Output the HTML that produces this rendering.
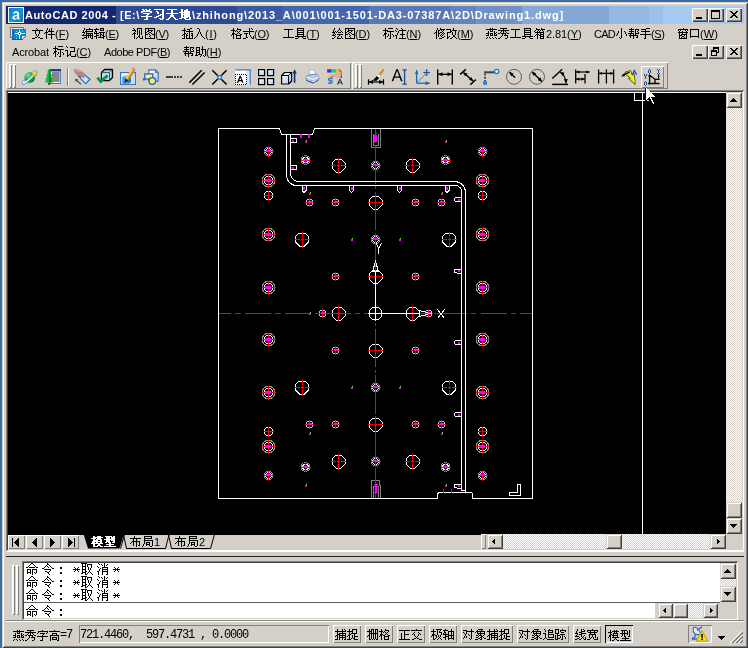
<!DOCTYPE html>
<html lang="zh"><head><meta charset="utf-8"><title>AutoCAD 2004</title>
<style>
html,body{margin:0;padding:0}
body{width:748px;height:648px;background:#3a6ea5;position:relative;overflow:hidden;font-family:"Liberation Sans",sans-serif;font-size:11px;color:#000}
div,span,svg.t,svg.i{position:absolute;box-sizing:border-box}
svg.t{fill:currentColor;shape-rendering:crispEdges;overflow:visible}
svg.i{overflow:visible}
.frame{background:#d4d0c8;box-shadow:inset 1px 1px 0 #d4d0c8,inset -1px -1px 0 #404040,inset 2px 2px 0 #fff,inset -2px -2px 0 #808080}
.title{background:linear-gradient(90deg,#12286e 0px,#12286e 110px,#2e4a92 110px,#2e4a92 231px,#3a5a9e 231px,#3a5a9e 276px,#4466ac 276px,#4466ac 363px,#5878b8 363px,#5878b8 444px,#6484c0 444px,#6484c0 470px,#7090c8 470px,#7090c8 516px,#86a8d6 516px,#86a8d6 603px,#94b8e0 603px,#94b8e0 643px,#9cc0e8 643px,#9cc0e8 657px,#a6caf0 657px,#a6caf0 738px)}
.btn{background:#d4d0c8;box-shadow:inset 1px 1px 0 #fff,inset -1px -1px 0 #404040,inset -2px -2px 0 #808080}
.sb{background:#d4d0c8;box-shadow:inset 1px 1px 0 #d4d0c8,inset -1px -1px 0 #404040,inset 2px 2px 0 #fff,inset -2px -2px 0 #808080}
.sunk{box-shadow:inset 1px 1px 0 #808080,inset -1px -1px 0 #fff,inset 2px 2px 0 #404040,inset -2px -2px 0 #d4d0c8}
.r1{box-shadow:inset 1px 1px 0 #fff,inset -1px -1px 0 #808080}
.s1{box-shadow:inset 1px 1px 0 #808080,inset -1px -1px 0 #fff}
.grip{width:3px;background:#f4f2ee;box-shadow:inset 1px 1px 0 #fff,inset -1px -1px 0 #808080}
.m,.tt,.mono{will-change:transform}
.m{white-space:pre;line-height:13px;font-size:11px}
.tt{white-space:pre;line-height:13px;font-size:11px;font-weight:bold;color:#fff}
.mono{white-space:pre;font-family:"Liberation Mono",monospace}
u{text-decoration:underline;text-underline-offset:1px}
.dith{background-color:#d4d0c8;background-image:conic-gradient(#fff 25%,#d4d0c8 0 50%,#fff 0 75%,#d4d0c8 0);background-size:2px 2px}
.hl{background:#fff}.dk{background:#808080}.bk{background:#404040}
</style></head>
<body>
<svg width="0" height="0" style="position:absolute"><defs><path id="g5b66b" d="M2 0h2v1h-2zM5 0h2v1h-2zM9 0h2v1h-2zM3 1h2v1h-2zM6 1h4v1h-4zM1 2h11v1h-11zM1 3h2v1h-2zM10 3h2v1h-2zM3 4h7v1h-7zM7 5h2v1h-2zM6 6h2v1h-2zM1 7h11v1h-11zM6 8h2v1h-2zM6 9h2v1h-2zM4 10h4v1h-4z"/><path id="g4e60b" d="M1 0h10v1h-10zM9 1h2v1h-2zM3 2h2v1h-2zM9 2h2v1h-2zM4 3h2v1h-2zM9 3h2v1h-2zM4 4h2v1h-2zM9 4h2v1h-2zM7 5h4v1h-4zM5 6h3v1h-3zM9 6h2v1h-2zM3 7h3v1h-3zM9 7h2v1h-2zM1 8h3v1h-3zM9 8h2v1h-2zM6 9h2v1h-2zM9 9h2v1h-2zM7 10h3v1h-3z"/><path id="g5929b" d="M1 0h10v1h-10zM5 1h2v1h-2zM5 2h2v1h-2zM5 3h2v1h-2zM0 4h12v1h-12zM5 5h2v1h-2zM4 6h4v1h-4zM4 7h4v1h-4zM3 8h2v1h-2zM7 8h2v1h-2zM2 9h2v1h-2zM8 9h2v1h-2zM0 10h3v1h-3zM9 10h3v1h-3z"/><path id="g5730b" d="M2 0h2v1h-2zM7 0h2v1h-2zM2 1h2v1h-2zM5 1h4v1h-4zM2 2h2v1h-2zM5 2h6v1h-6zM0 3h11v1h-11zM2 4h2v1h-2zM5 4h6v1h-6zM2 5h9v1h-9zM2 6h2v1h-2zM5 6h6v1h-6zM2 7h2v1h-2zM5 7h6v1h-6zM2 8h7v1h-7zM10 8h2v1h-2zM0 9h3v1h-3zM5 9h2v1h-2zM10 9h2v1h-2zM6 10h6v1h-6z"/><path id="g6587" d="M4 0h1v1h-1zM5 1h1v1h-1zM0 2h11v1h-11zM3 3h1v1h-1zM7 3h1v1h-1zM3 4h1v1h-1zM7 4h1v1h-1zM3 5h1v1h-1zM7 5h1v1h-1zM4 6h1v1h-1zM6 6h1v1h-1zM4 7h1v1h-1zM6 7h1v1h-1zM5 8h1v1h-1zM3 9h2v1h-2zM6 9h2v1h-2zM0 10h3v1h-3zM8 10h3v1h-3z"/><path id="g4ef6" d="M3 0h1v1h-1zM7 0h1v1h-1zM3 1h1v1h-1zM5 1h1v1h-1zM7 1h1v1h-1zM2 2h1v1h-1zM5 2h1v1h-1zM7 2h1v1h-1zM2 3h1v1h-1zM4 3h6v1h-6zM1 4h3v1h-3zM7 4h1v1h-1zM0 5h1v1h-1zM2 5h1v1h-1zM7 5h1v1h-1zM2 6h1v1h-1zM4 6h7v1h-7zM2 7h1v1h-1zM7 7h1v1h-1zM2 8h1v1h-1zM7 8h1v1h-1zM2 9h1v1h-1zM7 9h1v1h-1zM2 10h1v1h-1zM7 10h1v1h-1z"/><path id="g7f16" d="M2 0h1v1h-1zM7 0h1v1h-1zM2 1h1v1h-1zM4 1h7v1h-7zM1 2h1v1h-1zM4 2h1v1h-1zM10 2h1v1h-1zM1 3h1v1h-1zM3 3h8v1h-8zM0 4h3v1h-3zM4 4h1v1h-1zM2 5h1v1h-1zM4 5h7v1h-7zM1 6h1v1h-1zM4 6h1v1h-1zM6 6h1v1h-1zM8 6h1v1h-1zM10 6h1v1h-1zM0 7h11v1h-11zM4 8h1v1h-1zM6 8h1v1h-1zM8 8h1v1h-1zM10 8h1v1h-1zM2 9h3v1h-3zM6 9h1v1h-1zM8 9h1v1h-1zM10 9h1v1h-1zM0 10h2v1h-2zM4 10h1v1h-1zM9 10h2v1h-2z"/><path id="g8f91" d="M2 0h1v1h-1zM6 0h4v1h-4zM0 1h5v1h-5zM6 1h1v1h-1zM9 1h1v1h-1zM1 2h1v1h-1zM6 2h4v1h-4zM1 3h2v1h-2zM0 4h1v1h-1zM2 4h1v1h-1zM5 4h6v1h-6zM0 5h5v1h-5zM6 5h1v1h-1zM9 5h1v1h-1zM2 6h1v1h-1zM6 6h2v1h-2zM9 6h1v1h-1zM2 7h3v1h-3zM6 7h1v1h-1zM8 7h2v1h-2zM0 8h3v1h-3zM6 8h1v1h-1zM9 8h2v1h-2zM2 9h1v1h-1zM4 9h6v1h-6zM2 10h1v1h-1zM9 10h1v1h-1z"/><path id="g89c6" d="M1 0h1v1h-1zM5 0h5v1h-5zM2 1h1v1h-1zM5 1h1v1h-1zM9 1h1v1h-1zM0 2h4v1h-4zM5 2h1v1h-1zM7 2h1v1h-1zM9 2h1v1h-1zM3 3h1v1h-1zM5 3h1v1h-1zM7 3h1v1h-1zM9 3h1v1h-1zM2 4h1v1h-1zM5 4h1v1h-1zM7 4h1v1h-1zM9 4h1v1h-1zM1 5h3v1h-3zM5 5h1v1h-1zM7 5h1v1h-1zM9 5h1v1h-1zM0 6h1v1h-1zM2 6h1v1h-1zM5 6h1v1h-1zM7 6h1v1h-1zM9 6h1v1h-1zM2 7h1v1h-1zM7 7h1v1h-1zM2 8h1v1h-1zM6 8h2v1h-2zM10 8h1v1h-1zM2 9h1v1h-1zM5 9h1v1h-1zM7 9h1v1h-1zM10 9h1v1h-1zM2 10h1v1h-1zM4 10h1v1h-1zM8 10h3v1h-3z"/><path id="g56fe" d="M1 0h10v1h-10zM1 1h1v1h-1zM4 1h1v1h-1zM10 1h1v1h-1zM1 2h1v1h-1zM4 2h5v1h-5zM10 2h1v1h-1zM1 3h1v1h-1zM3 3h2v1h-2zM7 3h1v1h-1zM10 3h1v1h-1zM1 4h2v1h-2zM5 4h2v1h-2zM10 4h1v1h-1zM1 5h1v1h-1zM4 5h1v1h-1zM7 5h1v1h-1zM10 5h1v1h-1zM1 6h3v1h-3zM5 6h1v1h-1zM8 6h3v1h-3zM1 7h1v1h-1zM6 7h1v1h-1zM10 7h1v1h-1zM1 8h1v1h-1zM5 8h1v1h-1zM10 8h1v1h-1zM1 9h1v1h-1zM6 9h1v1h-1zM10 9h1v1h-1zM1 10h10v1h-10z"/><path id="g63d2" d="M2 0h1v1h-1zM8 0h2v1h-2zM2 1h1v1h-1zM5 1h3v1h-3zM0 2h4v1h-4zM7 2h1v1h-1zM2 3h1v1h-1zM4 3h7v1h-7zM2 4h1v1h-1zM7 4h1v1h-1zM2 5h2v1h-2zM5 5h1v1h-1zM7 5h1v1h-1zM9 5h2v1h-2zM1 6h2v1h-2zM4 6h1v1h-1zM7 6h1v1h-1zM10 6h1v1h-1zM0 7h1v1h-1zM2 7h1v1h-1zM4 7h2v1h-2zM7 7h1v1h-1zM9 7h2v1h-2zM2 8h1v1h-1zM4 8h1v1h-1zM7 8h1v1h-1zM10 8h1v1h-1zM2 9h1v1h-1zM4 9h1v1h-1zM7 9h1v1h-1zM10 9h1v1h-1zM0 10h3v1h-3zM4 10h7v1h-7z"/><path id="g5165" d="M3 0h2v1h-2zM5 1h1v1h-1zM5 2h1v1h-1zM5 3h1v1h-1zM4 4h1v1h-1zM6 4h1v1h-1zM4 5h1v1h-1zM6 5h1v1h-1zM3 6h1v1h-1zM7 6h1v1h-1zM3 7h1v1h-1zM7 7h1v1h-1zM2 8h1v1h-1zM8 8h1v1h-1zM1 9h1v1h-1zM9 9h1v1h-1zM0 10h1v1h-1zM10 10h1v1h-1z"/><path id="g683c" d="M2 0h1v1h-1zM6 0h1v1h-1zM2 1h1v1h-1zM6 1h4v1h-4zM0 2h4v1h-4zM5 2h1v1h-1zM9 2h1v1h-1zM2 3h1v1h-1zM4 3h1v1h-1zM6 3h1v1h-1zM8 3h1v1h-1zM2 4h1v1h-1zM7 4h1v1h-1zM1 5h3v1h-3zM6 5h1v1h-1zM8 5h1v1h-1zM1 6h2v1h-2zM4 6h2v1h-2zM9 6h2v1h-2zM0 7h1v1h-1zM2 7h1v1h-1zM5 7h5v1h-5zM2 8h1v1h-1zM5 8h1v1h-1zM9 8h1v1h-1zM2 9h1v1h-1zM5 9h1v1h-1zM9 9h1v1h-1zM2 10h1v1h-1zM5 10h5v1h-5z"/><path id="g5f0f" d="M6 0h1v1h-1zM8 0h1v1h-1zM6 1h1v1h-1zM9 1h1v1h-1zM6 2h1v1h-1zM0 3h11v1h-11zM6 4h1v1h-1zM1 5h4v1h-4zM6 5h1v1h-1zM3 6h1v1h-1zM6 6h1v1h-1zM3 7h1v1h-1zM7 7h1v1h-1zM3 8h1v1h-1zM7 8h1v1h-1zM10 8h1v1h-1zM3 9h2v1h-2zM8 9h1v1h-1zM10 9h1v1h-1zM0 10h3v1h-3zM9 10h2v1h-2z"/><path id="g5de5" d="M1 1h9v1h-9zM5 2h1v1h-1zM5 3h1v1h-1zM5 4h1v1h-1zM5 5h1v1h-1zM5 6h1v1h-1zM5 7h1v1h-1zM5 8h1v1h-1zM0 9h11v1h-11z"/><path id="g5177" d="M2 0h7v1h-7zM2 1h1v1h-1zM8 1h1v1h-1zM2 2h7v1h-7zM2 3h1v1h-1zM8 3h1v1h-1zM2 4h7v1h-7zM2 5h1v1h-1zM8 5h1v1h-1zM2 6h7v1h-7zM2 7h1v1h-1zM8 7h1v1h-1zM0 8h11v1h-11zM3 9h1v1h-1zM7 9h1v1h-1zM0 10h3v1h-3zM8 10h3v1h-3z"/><path id="g7ed8" d="M2 0h1v1h-1zM7 0h1v1h-1zM2 1h1v1h-1zM7 1h1v1h-1zM1 2h1v1h-1zM6 2h1v1h-1zM8 2h1v1h-1zM1 3h1v1h-1zM3 3h1v1h-1zM5 3h1v1h-1zM9 3h1v1h-1zM0 4h3v1h-3zM4 4h1v1h-1zM6 4h3v1h-3zM10 4h1v1h-1zM2 5h1v1h-1zM1 6h1v1h-1zM3 6h1v1h-1zM5 6h6v1h-6zM0 7h3v1h-3zM7 7h1v1h-1zM3 8h1v1h-1zM6 8h1v1h-1zM9 8h1v1h-1zM2 9h1v1h-1zM5 9h1v1h-1zM9 9h1v1h-1zM0 10h2v1h-2zM5 10h4v1h-4zM10 10h1v1h-1z"/><path id="g6807" d="M2 0h1v1h-1zM5 0h5v1h-5zM2 1h1v1h-1zM0 2h5v1h-5zM2 3h1v1h-1zM4 3h7v1h-7zM2 4h1v1h-1zM7 4h1v1h-1zM1 5h3v1h-3zM7 5h1v1h-1zM1 6h2v1h-2zM5 6h1v1h-1zM7 6h1v1h-1zM9 6h1v1h-1zM0 7h1v1h-1zM2 7h1v1h-1zM5 7h1v1h-1zM7 7h1v1h-1zM10 7h1v1h-1zM2 8h1v1h-1zM4 8h1v1h-1zM7 8h1v1h-1zM10 8h1v1h-1zM2 9h1v1h-1zM7 9h1v1h-1zM2 10h1v1h-1zM6 10h2v1h-2z"/><path id="g6ce8" d="M1 0h1v1h-1zM6 0h1v1h-1zM2 1h1v1h-1zM7 1h1v1h-1zM0 2h1v1h-1zM4 2h7v1h-7zM1 3h1v1h-1zM3 3h1v1h-1zM7 3h1v1h-1zM3 4h1v1h-1zM7 4h1v1h-1zM2 5h1v1h-1zM7 5h1v1h-1zM2 6h1v1h-1zM5 6h5v1h-5zM0 7h2v1h-2zM7 7h1v1h-1zM1 8h1v1h-1zM7 8h1v1h-1zM1 9h1v1h-1zM7 9h1v1h-1zM1 10h1v1h-1zM4 10h7v1h-7z"/><path id="g4fee" d="M3 0h1v1h-1zM6 0h1v1h-1zM3 1h1v1h-1zM6 1h5v1h-5zM2 2h1v1h-1zM4 2h2v1h-2zM7 2h1v1h-1zM9 2h1v1h-1zM2 3h1v1h-1zM4 3h1v1h-1zM8 3h1v1h-1zM1 4h2v1h-2zM4 4h1v1h-1zM6 4h2v1h-2zM9 4h1v1h-1zM0 5h1v1h-1zM2 5h1v1h-1zM4 5h2v1h-2zM8 5h1v1h-1zM10 5h1v1h-1zM2 6h1v1h-1zM4 6h1v1h-1zM7 6h1v1h-1zM9 6h1v1h-1zM2 7h1v1h-1zM4 7h1v1h-1zM6 7h1v1h-1zM8 7h1v1h-1zM2 8h1v1h-1zM4 8h1v1h-1zM7 8h1v1h-1zM10 8h1v1h-1zM2 9h1v1h-1zM8 9h2v1h-2zM2 10h1v1h-1zM5 10h3v1h-3z"/><path id="g6539" d="M7 0h1v1h-1zM0 1h5v1h-5zM7 1h1v1h-1zM4 2h1v1h-1zM6 2h5v1h-5zM4 3h2v1h-2zM9 3h1v1h-1zM1 4h4v1h-4zM6 4h1v1h-1zM9 4h1v1h-1zM1 5h1v1h-1zM6 5h1v1h-1zM9 5h1v1h-1zM1 6h1v1h-1zM6 6h1v1h-1zM9 6h1v1h-1zM1 7h1v1h-1zM7 7h2v1h-2zM1 8h1v1h-1zM3 8h1v1h-1zM7 8h2v1h-2zM1 9h2v1h-2zM6 9h1v1h-1zM9 9h1v1h-1zM1 10h1v1h-1zM4 10h2v1h-2zM10 10h1v1h-1z"/><path id="g71d5" d="M4 0h1v1h-1zM6 0h1v1h-1zM0 1h11v1h-11zM4 2h1v1h-1zM6 2h1v1h-1zM2 3h1v1h-1zM4 3h3v1h-3zM8 3h1v1h-1zM2 4h1v1h-1zM8 4h1v1h-1zM10 4h1v1h-1zM0 5h3v1h-3zM4 5h3v1h-3zM8 5h2v1h-2zM2 6h1v1h-1zM4 6h1v1h-1zM6 6h1v1h-1zM8 6h1v1h-1zM10 6h1v1h-1zM0 7h3v1h-3zM4 7h3v1h-3zM8 7h3v1h-3zM1 9h1v1h-1zM3 9h1v1h-1zM6 9h1v1h-1zM9 9h1v1h-1zM0 10h1v1h-1zM4 10h1v1h-1zM7 10h1v1h-1zM10 10h1v1h-1z"/><path id="g79c0" d="M2 0h7v1h-7zM5 1h1v1h-1zM0 2h11v1h-11zM3 3h1v1h-1zM5 3h1v1h-1zM7 3h1v1h-1zM2 4h1v1h-1zM5 4h1v1h-1zM8 4h1v1h-1zM0 5h2v1h-2zM3 5h5v1h-5zM9 5h2v1h-2zM4 6h1v1h-1zM7 6h1v1h-1zM4 7h1v1h-1zM6 7h4v1h-4zM3 8h1v1h-1zM9 8h1v1h-1zM2 9h1v1h-1zM9 9h1v1h-1zM0 10h2v1h-2zM7 10h2v1h-2z"/><path id="g7bb1" d="M2 0h1v1h-1zM7 0h1v1h-1zM2 1h4v1h-4zM7 1h4v1h-4zM1 2h1v1h-1zM4 2h1v1h-1zM6 2h1v1h-1zM8 2h1v1h-1zM0 3h1v1h-1zM3 3h1v1h-1zM5 3h1v1h-1zM9 3h1v1h-1zM1 4h9v1h-9zM3 5h1v1h-1zM6 5h1v1h-1zM9 5h1v1h-1zM2 6h3v1h-3zM6 6h4v1h-4zM1 7h1v1h-1zM3 7h1v1h-1zM5 7h2v1h-2zM9 7h1v1h-1zM0 8h1v1h-1zM3 8h1v1h-1zM6 8h4v1h-4zM3 9h1v1h-1zM6 9h1v1h-1zM9 9h1v1h-1zM3 10h1v1h-1zM6 10h4v1h-4z"/><path id="g5c0f" d="M5 0h1v1h-1zM5 1h1v1h-1zM5 2h1v1h-1zM2 3h1v1h-1zM5 3h1v1h-1zM8 3h1v1h-1zM2 4h1v1h-1zM5 4h1v1h-1zM9 4h1v1h-1zM1 5h1v1h-1zM5 5h1v1h-1zM9 5h1v1h-1zM1 6h1v1h-1zM5 6h1v1h-1zM10 6h1v1h-1zM0 7h1v1h-1zM5 7h1v1h-1zM10 7h1v1h-1zM5 8h1v1h-1zM3 9h1v1h-1zM5 9h1v1h-1zM4 10h1v1h-1z"/><path id="g5e2e" d="M3 0h1v1h-1zM1 1h5v1h-5zM7 1h4v1h-4zM3 2h1v1h-1zM7 2h1v1h-1zM10 2h1v1h-1zM1 3h5v1h-5zM7 3h1v1h-1zM9 3h1v1h-1zM3 4h1v1h-1zM7 4h1v1h-1zM10 4h1v1h-1zM0 5h6v1h-6zM7 5h4v1h-4zM2 6h1v1h-1zM5 6h1v1h-1zM7 6h1v1h-1zM1 7h9v1h-9zM2 8h1v1h-1zM5 8h1v1h-1zM9 8h1v1h-1zM2 9h1v1h-1zM5 9h1v1h-1zM8 9h2v1h-2zM5 10h1v1h-1z"/><path id="g624b" d="M6 0h4v1h-4zM1 1h5v1h-5zM5 2h1v1h-1zM1 3h9v1h-9zM5 4h1v1h-1zM5 5h1v1h-1zM0 6h11v1h-11zM5 7h1v1h-1zM5 8h1v1h-1zM5 9h1v1h-1zM4 10h2v1h-2z"/><path id="g7a97" d="M6 0h1v1h-1zM1 1h10v1h-10zM1 2h1v1h-1zM3 2h1v1h-1zM8 2h1v1h-1zM10 2h1v1h-1zM2 3h1v1h-1zM5 3h1v1h-1zM9 3h1v1h-1zM1 4h10v1h-10zM2 5h1v1h-1zM5 5h1v1h-1zM9 5h1v1h-1zM2 6h1v1h-1zM4 6h6v1h-6zM2 7h3v1h-3zM7 7h1v1h-1zM9 7h1v1h-1zM2 8h1v1h-1zM5 8h2v1h-2zM9 8h1v1h-1zM2 9h1v1h-1zM4 9h1v1h-1zM7 9h1v1h-1zM9 9h1v1h-1zM2 10h8v1h-8z"/><path id="g53e3" d="M1 1h9v1h-9zM1 2h1v1h-1zM9 2h1v1h-1zM1 3h1v1h-1zM9 3h1v1h-1zM1 4h1v1h-1zM9 4h1v1h-1zM1 5h1v1h-1zM9 5h1v1h-1zM1 6h1v1h-1zM9 6h1v1h-1zM1 7h1v1h-1zM9 7h1v1h-1zM1 8h9v1h-9zM1 9h1v1h-1zM9 9h1v1h-1z"/><path id="g8bb0" d="M1 0h1v1h-1zM2 1h1v1h-1zM5 1h5v1h-5zM9 2h1v1h-1zM9 3h1v1h-1zM0 4h3v1h-3zM9 4h1v1h-1zM2 5h1v1h-1zM5 5h5v1h-5zM2 6h1v1h-1zM5 6h1v1h-1zM2 7h1v1h-1zM5 7h1v1h-1zM2 8h1v1h-1zM4 8h2v1h-2zM10 8h1v1h-1zM2 9h2v1h-2zM5 9h1v1h-1zM10 9h1v1h-1zM2 10h1v1h-1zM6 10h5v1h-5z"/><path id="g52a9" d="M7 0h1v1h-1zM1 1h4v1h-4zM7 1h1v1h-1zM1 2h1v1h-1zM4 2h1v1h-1zM7 2h1v1h-1zM1 3h1v1h-1zM4 3h1v1h-1zM6 3h5v1h-5zM1 4h4v1h-4zM7 4h1v1h-1zM10 4h1v1h-1zM1 5h1v1h-1zM4 5h1v1h-1zM7 5h1v1h-1zM10 5h1v1h-1zM1 6h4v1h-4zM7 6h1v1h-1zM10 6h1v1h-1zM1 7h1v1h-1zM4 7h1v1h-1zM7 7h1v1h-1zM10 7h1v1h-1zM1 8h1v1h-1zM3 8h4v1h-4zM10 8h1v1h-1zM0 9h3v1h-3zM6 9h1v1h-1zM8 9h1v1h-1zM10 9h1v1h-1zM5 10h1v1h-1zM9 10h1v1h-1z"/><path id="g6a21b" d="M2 0h2v1h-2zM6 0h4v1h-4zM2 1h10v1h-10zM0 2h5v1h-5zM6 2h4v1h-4zM2 3h2v1h-2zM5 3h6v1h-6zM2 4h5v1h-5zM9 4h2v1h-2zM1 5h10v1h-10zM1 6h3v1h-3zM5 6h2v1h-2zM9 6h2v1h-2zM0 7h12v1h-12zM2 8h2v1h-2zM7 8h2v1h-2zM2 9h2v1h-2zM6 9h4v1h-4zM2 10h5v1h-5zM9 10h3v1h-3z"/><path id="g578bb" d="M1 0h7v1h-7zM9 0h2v1h-2zM2 1h4v1h-4zM7 1h4v1h-4zM2 2h4v1h-4zM7 2h4v1h-4zM0 3h11v1h-11zM2 4h4v1h-4zM7 4h4v1h-4zM2 5h4v1h-4zM9 5h2v1h-2zM1 6h2v1h-2zM4 6h3v1h-3zM8 6h3v1h-3zM5 7h2v1h-2zM2 8h8v1h-8zM5 9h2v1h-2zM0 10h12v1h-12z"/><path id="g5e03" d="M4 0h1v1h-1zM4 1h1v1h-1zM0 2h11v1h-11zM3 3h1v1h-1zM6 3h1v1h-1zM3 4h1v1h-1zM6 4h1v1h-1zM2 5h8v1h-8zM1 6h1v1h-1zM3 6h1v1h-1zM6 6h1v1h-1zM9 6h1v1h-1zM0 7h1v1h-1zM3 7h1v1h-1zM6 7h1v1h-1zM9 7h1v1h-1zM3 8h1v1h-1zM6 8h1v1h-1zM9 8h1v1h-1zM3 9h1v1h-1zM6 9h1v1h-1zM8 9h2v1h-2zM6 10h1v1h-1z"/><path id="g5c40" d="M2 0h8v1h-8zM2 1h1v1h-1zM9 1h1v1h-1zM2 2h8v1h-8zM2 3h1v1h-1zM2 4h9v1h-9zM2 5h1v1h-1zM10 5h1v1h-1zM2 6h1v1h-1zM4 6h4v1h-4zM10 6h1v1h-1zM2 7h1v1h-1zM4 7h1v1h-1zM7 7h1v1h-1zM10 7h1v1h-1zM1 8h1v1h-1zM4 8h4v1h-4zM10 8h1v1h-1zM1 9h1v1h-1zM4 9h1v1h-1zM7 9h1v1h-1zM10 9h1v1h-1zM0 10h1v1h-1zM8 10h2v1h-2z"/><path id="g547ds13" d="M5 0h2v1h-2zM4 1h1v1h-1zM7 1h1v1h-1zM3 2h1v1h-1zM8 2h1v1h-1zM2 3h1v1h-1zM9 3h1v1h-1zM0 4h2v1h-2zM3 4h6v1h-6zM10 4h2v1h-2zM1 6h4v1h-4zM6 6h5v1h-5zM1 7h1v1h-1zM4 7h1v1h-1zM6 7h1v1h-1zM10 7h1v1h-1zM1 8h1v1h-1zM4 8h1v1h-1zM6 8h1v1h-1zM10 8h1v1h-1zM1 9h4v1h-4zM6 9h1v1h-1zM8 9h1v1h-1zM10 9h1v1h-1zM1 10h1v1h-1zM4 10h1v1h-1zM6 10h1v1h-1zM9 10h1v1h-1zM6 11h1v1h-1z"/><path id="g4ee4s13" d="M5 0h1v1h-1zM5 1h2v1h-2zM4 2h1v1h-1zM7 2h1v1h-1zM3 3h1v1h-1zM5 3h1v1h-1zM8 3h1v1h-1zM2 4h1v1h-1zM6 4h1v1h-1zM9 4h1v1h-1zM0 5h2v1h-2zM10 5h2v1h-2zM2 6h7v1h-7zM8 7h1v1h-1zM3 8h2v1h-2zM7 8h1v1h-1zM5 9h2v1h-2zM6 10h1v1h-1zM7 11h1v1h-1z"/><path id="g53d6s13" d="M0 0h6v1h-6zM1 1h1v1h-1zM4 1h1v1h-1zM6 1h5v1h-5zM1 2h1v1h-1zM4 2h1v1h-1zM6 2h1v1h-1zM10 2h1v1h-1zM1 3h4v1h-4zM6 3h1v1h-1zM10 3h1v1h-1zM1 4h1v1h-1zM4 4h1v1h-1zM7 4h1v1h-1zM10 4h1v1h-1zM1 5h1v1h-1zM4 5h1v1h-1zM7 5h1v1h-1zM9 5h1v1h-1zM1 6h4v1h-4zM7 6h1v1h-1zM9 6h1v1h-1zM1 7h1v1h-1zM4 7h1v1h-1zM8 7h1v1h-1zM1 8h1v1h-1zM4 8h2v1h-2zM8 8h1v1h-1zM1 9h4v1h-4zM7 9h1v1h-1zM9 9h1v1h-1zM0 10h2v1h-2zM4 10h1v1h-1zM6 10h1v1h-1zM10 10h1v1h-1zM4 11h2v1h-2zM11 11h1v1h-1z"/><path id="g6d88s13" d="M1 0h1v1h-1zM7 0h1v1h-1zM2 1h1v1h-1zM4 1h1v1h-1zM7 1h1v1h-1zM10 1h1v1h-1zM5 2h1v1h-1zM7 2h1v1h-1zM9 2h1v1h-1zM0 3h1v1h-1zM7 3h1v1h-1zM1 4h1v1h-1zM5 4h6v1h-6zM3 5h1v1h-1zM5 5h1v1h-1zM10 5h1v1h-1zM2 6h1v1h-1zM5 6h6v1h-6zM2 7h1v1h-1zM5 7h1v1h-1zM10 7h1v1h-1zM0 8h2v1h-2zM5 8h6v1h-6zM1 9h1v1h-1zM5 9h1v1h-1zM10 9h1v1h-1zM1 10h1v1h-1zM5 10h1v1h-1zM10 10h1v1h-1zM1 11h1v1h-1zM5 11h1v1h-1zM9 11h2v1h-2z"/><path id="g5b57" d="M5 0h1v1h-1zM1 1h10v1h-10zM1 2h1v1h-1zM10 2h1v1h-1zM0 3h1v1h-1zM3 3h5v1h-5zM9 3h1v1h-1zM6 4h1v1h-1zM5 5h1v1h-1zM0 6h11v1h-11zM5 7h1v1h-1zM5 8h1v1h-1zM5 9h1v1h-1zM3 10h3v1h-3z"/><path id="g9ad8" d="M5 0h1v1h-1zM0 1h11v1h-11zM3 3h5v1h-5zM3 4h1v1h-1zM7 4h1v1h-1zM1 5h9v1h-9zM1 6h1v1h-1zM9 6h1v1h-1zM1 7h1v1h-1zM3 7h5v1h-5zM9 7h1v1h-1zM1 8h1v1h-1zM3 8h1v1h-1zM7 8h1v1h-1zM9 8h1v1h-1zM1 9h1v1h-1zM3 9h5v1h-5zM9 9h1v1h-1zM1 10h1v1h-1zM8 10h2v1h-2z"/><path id="g6355" d="M2 0h1v1h-1zM7 0h1v1h-1zM9 0h1v1h-1zM2 1h1v1h-1zM7 1h1v1h-1zM10 1h1v1h-1zM0 2h11v1h-11zM2 3h1v1h-1zM7 3h1v1h-1zM2 4h1v1h-1zM4 4h7v1h-7zM2 5h3v1h-3zM7 5h1v1h-1zM10 5h1v1h-1zM1 6h2v1h-2zM4 6h7v1h-7zM0 7h1v1h-1zM2 7h1v1h-1zM4 7h1v1h-1zM7 7h1v1h-1zM10 7h1v1h-1zM2 8h1v1h-1zM4 8h7v1h-7zM2 9h1v1h-1zM4 9h1v1h-1zM7 9h1v1h-1zM10 9h1v1h-1zM0 10h3v1h-3zM4 10h1v1h-1zM7 10h1v1h-1zM9 10h2v1h-2z"/><path id="g6349" d="M2 0h1v1h-1zM5 0h5v1h-5zM2 1h1v1h-1zM5 1h1v1h-1zM9 1h1v1h-1zM0 2h6v1h-6zM9 2h1v1h-1zM2 3h1v1h-1zM5 3h1v1h-1zM9 3h1v1h-1zM2 4h1v1h-1zM4 4h6v1h-6zM2 5h2v1h-2zM7 5h1v1h-1zM1 6h2v1h-2zM5 6h1v1h-1zM7 6h1v1h-1zM0 7h1v1h-1zM2 7h1v1h-1zM5 7h1v1h-1zM7 7h4v1h-4zM2 8h1v1h-1zM5 8h1v1h-1zM7 8h1v1h-1zM2 9h1v1h-1zM4 9h1v1h-1zM6 9h2v1h-2zM0 10h4v1h-4zM7 10h4v1h-4z"/><path id="g6805" d="M2 0h1v1h-1zM4 0h3v1h-3zM8 0h3v1h-3zM2 1h1v1h-1zM4 1h1v1h-1zM6 1h1v1h-1zM8 1h1v1h-1zM10 1h1v1h-1zM0 2h5v1h-5zM6 2h1v1h-1zM8 2h1v1h-1zM10 2h1v1h-1zM2 3h1v1h-1zM4 3h1v1h-1zM6 3h1v1h-1zM8 3h1v1h-1zM10 3h1v1h-1zM2 4h9v1h-9zM2 5h1v1h-1zM4 5h1v1h-1zM6 5h1v1h-1zM8 5h1v1h-1zM10 5h1v1h-1zM1 6h2v1h-2zM4 6h1v1h-1zM6 6h1v1h-1zM8 6h1v1h-1zM10 6h1v1h-1zM0 7h1v1h-1zM2 7h1v1h-1zM4 7h1v1h-1zM6 7h1v1h-1zM8 7h1v1h-1zM10 7h1v1h-1zM2 8h1v1h-1zM4 8h1v1h-1zM6 8h1v1h-1zM8 8h1v1h-1zM10 8h1v1h-1zM2 9h1v1h-1zM4 9h1v1h-1zM6 9h1v1h-1zM8 9h1v1h-1zM10 9h1v1h-1zM2 10h2v1h-2zM5 10h1v1h-1zM7 10h1v1h-1zM9 10h2v1h-2z"/><path id="g6b63" d="M0 1h11v1h-11zM5 2h1v1h-1zM5 3h1v1h-1zM2 4h1v1h-1zM5 4h1v1h-1zM2 5h1v1h-1zM5 5h5v1h-5zM2 6h1v1h-1zM5 6h1v1h-1zM2 7h1v1h-1zM5 7h1v1h-1zM2 8h1v1h-1zM5 8h1v1h-1zM2 9h1v1h-1zM5 9h1v1h-1zM0 10h11v1h-11z"/><path id="g4ea4" d="M5 0h1v1h-1zM0 1h11v1h-11zM3 3h1v1h-1zM7 3h1v1h-1zM2 4h1v1h-1zM8 4h1v1h-1zM1 5h1v1h-1zM3 5h1v1h-1zM7 5h1v1h-1zM9 5h1v1h-1zM3 6h1v1h-1zM7 6h1v1h-1zM4 7h1v1h-1zM6 7h1v1h-1zM5 8h1v1h-1zM3 9h2v1h-2zM6 9h2v1h-2zM1 10h2v1h-2zM8 10h3v1h-3z"/><path id="g6781" d="M2 0h1v1h-1zM5 0h6v1h-6zM2 1h1v1h-1zM6 1h1v1h-1zM9 1h1v1h-1zM0 2h5v1h-5zM6 2h1v1h-1zM8 2h1v1h-1zM2 3h1v1h-1zM6 3h1v1h-1zM8 3h3v1h-3zM2 4h1v1h-1zM6 4h1v1h-1zM10 4h1v1h-1zM1 5h3v1h-3zM6 5h1v1h-1zM10 5h1v1h-1zM1 6h2v1h-2zM4 6h2v1h-2zM7 6h1v1h-1zM9 6h1v1h-1zM0 7h1v1h-1zM2 7h1v1h-1zM5 7h1v1h-1zM7 7h1v1h-1zM9 7h1v1h-1zM2 8h1v1h-1zM5 8h1v1h-1zM8 8h1v1h-1zM2 9h1v1h-1zM4 9h1v1h-1zM7 9h1v1h-1zM9 9h1v1h-1zM2 10h2v1h-2zM6 10h1v1h-1zM10 10h1v1h-1z"/><path id="g8f74" d="M2 0h1v1h-1zM8 0h1v1h-1zM0 1h5v1h-5zM8 1h1v1h-1zM1 2h1v1h-1zM5 2h6v1h-6zM1 3h2v1h-2zM5 3h1v1h-1zM8 3h1v1h-1zM10 3h1v1h-1zM0 4h1v1h-1zM2 4h1v1h-1zM5 4h1v1h-1zM8 4h1v1h-1zM10 4h1v1h-1zM0 5h6v1h-6zM8 5h1v1h-1zM10 5h1v1h-1zM2 6h1v1h-1zM5 6h6v1h-6zM2 7h4v1h-4zM8 7h1v1h-1zM10 7h1v1h-1zM0 8h3v1h-3zM5 8h1v1h-1zM8 8h1v1h-1zM10 8h1v1h-1zM2 9h1v1h-1zM5 9h6v1h-6zM2 10h1v1h-1zM5 10h1v1h-1zM10 10h1v1h-1z"/><path id="g5bf9" d="M8 0h1v1h-1zM0 1h4v1h-4zM8 1h1v1h-1zM3 2h8v1h-8zM0 3h1v1h-1zM3 3h1v1h-1zM8 3h1v1h-1zM1 4h1v1h-1zM3 4h1v1h-1zM8 4h1v1h-1zM2 5h1v1h-1zM5 5h1v1h-1zM8 5h1v1h-1zM2 6h1v1h-1zM6 6h1v1h-1zM8 6h1v1h-1zM1 7h1v1h-1zM3 7h1v1h-1zM8 7h1v1h-1zM1 8h1v1h-1zM3 8h1v1h-1zM8 8h1v1h-1zM0 9h1v1h-1zM6 9h1v1h-1zM8 9h1v1h-1zM7 10h1v1h-1z"/><path id="g8c61" d="M3 0h5v1h-5zM2 1h1v1h-1zM6 1h1v1h-1zM1 2h9v1h-9zM0 3h1v1h-1zM2 3h1v1h-1zM5 3h1v1h-1zM9 3h1v1h-1zM2 4h8v1h-8zM3 5h1v1h-1zM5 5h1v1h-1zM9 5h1v1h-1zM1 6h2v1h-2zM4 6h3v1h-3zM8 6h1v1h-1zM3 7h1v1h-1zM6 7h2v1h-2zM1 8h2v1h-2zM5 8h2v1h-2zM8 8h1v1h-1zM3 9h2v1h-2zM6 9h1v1h-1zM9 9h2v1h-2zM0 10h3v1h-3zM5 10h2v1h-2z"/><path id="g8ffd" d="M1 0h1v1h-1zM6 0h1v1h-1zM2 1h1v1h-1zM5 1h5v1h-5zM2 2h1v1h-1zM5 2h1v1h-1zM9 2h1v1h-1zM5 3h5v1h-5zM0 4h3v1h-3zM5 4h1v1h-1zM2 5h1v1h-1zM5 5h6v1h-6zM2 6h1v1h-1zM5 6h1v1h-1zM10 6h1v1h-1zM2 7h1v1h-1zM5 7h1v1h-1zM10 7h1v1h-1zM2 8h1v1h-1zM5 8h6v1h-6zM1 9h1v1h-1zM3 9h1v1h-1zM0 10h1v1h-1zM4 10h7v1h-7z"/><path id="g8e2a" d="M0 0h4v1h-4zM7 0h1v1h-1zM0 1h1v1h-1zM3 1h1v1h-1zM5 1h6v1h-6zM0 2h1v1h-1zM3 2h1v1h-1zM5 2h1v1h-1zM10 2h1v1h-1zM0 3h1v1h-1zM3 3h1v1h-1zM6 3h3v1h-3zM0 4h4v1h-4zM2 5h1v1h-1zM5 5h5v1h-5zM0 6h1v1h-1zM2 6h3v1h-3zM7 6h1v1h-1zM0 7h1v1h-1zM2 7h1v1h-1zM5 7h1v1h-1zM7 7h1v1h-1zM9 7h1v1h-1zM0 8h1v1h-1zM2 8h1v1h-1zM5 8h1v1h-1zM7 8h1v1h-1zM10 8h1v1h-1zM0 9h1v1h-1zM2 9h3v1h-3zM7 9h1v1h-1zM10 9h1v1h-1zM0 10h3v1h-3zM6 10h2v1h-2z"/><path id="g7ebf" d="M2 0h1v1h-1zM6 0h1v1h-1zM8 0h1v1h-1zM2 1h1v1h-1zM6 1h1v1h-1zM9 1h1v1h-1zM1 2h1v1h-1zM6 2h4v1h-4zM1 3h1v1h-1zM4 3h3v1h-3zM0 4h3v1h-3zM6 4h5v1h-5zM2 5h1v1h-1zM4 5h3v1h-3zM1 6h1v1h-1zM6 6h1v1h-1zM9 6h1v1h-1zM0 7h4v1h-4zM6 7h1v1h-1zM8 7h1v1h-1zM4 8h1v1h-1zM7 8h1v1h-1zM10 8h1v1h-1zM2 9h2v1h-2zM6 9h1v1h-1zM8 9h1v1h-1zM10 9h1v1h-1zM0 10h2v1h-2zM4 10h2v1h-2zM9 10h2v1h-2z"/><path id="g5bbd" d="M5 0h1v1h-1zM0 1h11v1h-11zM0 2h1v1h-1zM3 2h1v1h-1zM7 2h1v1h-1zM10 2h1v1h-1zM1 3h9v1h-9zM3 4h1v1h-1zM7 4h1v1h-1zM2 5h7v1h-7zM2 6h1v1h-1zM5 6h1v1h-1zM8 6h1v1h-1zM2 7h1v1h-1zM5 7h1v1h-1zM8 7h1v1h-1zM2 8h1v1h-1zM4 8h1v1h-1zM6 8h1v1h-1zM8 8h1v1h-1zM10 8h1v1h-1zM3 9h1v1h-1zM6 9h1v1h-1zM10 9h1v1h-1zM0 10h3v1h-3zM7 10h4v1h-4z"/><path id="g6a21" d="M2 0h1v1h-1zM6 0h1v1h-1zM8 0h1v1h-1zM2 1h1v1h-1zM4 1h7v1h-7zM0 2h4v1h-4zM6 2h1v1h-1zM8 2h1v1h-1zM2 3h1v1h-1zM5 3h5v1h-5zM2 4h2v1h-2zM5 4h1v1h-1zM9 4h1v1h-1zM1 5h2v1h-2zM4 5h6v1h-6zM1 6h2v1h-2zM5 6h1v1h-1zM9 6h1v1h-1zM0 7h1v1h-1zM2 7h1v1h-1zM4 7h7v1h-7zM2 8h1v1h-1zM7 8h1v1h-1zM2 9h1v1h-1zM6 9h1v1h-1zM8 9h1v1h-1zM2 10h1v1h-1zM4 10h2v1h-2zM9 10h2v1h-2z"/><path id="g578b" d="M1 0h6v1h-6zM9 0h1v1h-1zM2 1h1v1h-1zM4 1h1v1h-1zM7 1h1v1h-1zM9 1h1v1h-1zM2 2h1v1h-1zM4 2h1v1h-1zM7 2h1v1h-1zM9 2h1v1h-1zM0 3h8v1h-8zM9 3h1v1h-1zM2 4h1v1h-1zM4 4h1v1h-1zM7 4h1v1h-1zM9 4h1v1h-1zM2 5h1v1h-1zM4 5h1v1h-1zM9 5h1v1h-1zM1 6h1v1h-1zM4 6h2v1h-2zM8 6h2v1h-2zM5 7h1v1h-1zM2 8h7v1h-7zM5 9h1v1h-1zM0 10h11v1h-11z"/></defs></svg>
<div class="frame" style="left:2px;top:2px;width:746px;height:646px;"></div>
<div class="title" style="left:6px;top:6px;width:738px;height:18px;"></div>
<svg class="i" style="left:8px;top:7px" width="16" height="16" viewBox="0 0 16 16"><defs><linearGradient id="ai" x1="0" y1="0" x2="1" y2="1"><stop offset="0" stop-color="#0b7fc4"/><stop offset=".5" stop-color="#1299dc"/><stop offset="1" stop-color="#0a78b8"/></linearGradient></defs><rect width="16" height="16" fill="#fff"/><rect x="1" y="1" width="14" height="14" fill="url(#ai)"/><path d="M5.2 6.3C5.6 4.9 6.7 4.3 8.2 4.3c1.9 0 2.9.9 2.9 2.6v4c0 .5.2.8.7.9v.7c-1.3.3-2.3 0-2.5-.9-.7.7-1.5 1.100-2.500 1.100-1.500 0-2.400-.8-2.400-2.100 0-1.600 1.300-2.300 4.700-2.600v-.8c0-.9-.4-1.400-1.200-1.400-.7 0-1.100.4-1.300 1.100zM9.100 9.100c-1.900.2-2.700.6-2.700 1.400 0 .6.400.9 1 .9.700 0 1.300-.400 1.700-.900z" fill="#fff"/></svg>
<span class="tt" style="left:25px;top:9px;letter-spacing:0.584px;">AutoCAD 2004 - [E:\</span>
<svg class="t" role="img" aria-label="学习天地" style="left:140px;top:9px;color:#fff" width="54" height="12"><use href="#g5b66b" x="0"/><use href="#g4e60b" x="13"/><use href="#g5929b" x="26"/><use href="#g5730b" x="39"/></svg>
<span class="tt" style="left:192px;top:9px;letter-spacing:0.857px;">\zhihong\2013_A\001\001-1501-DA3-07387A\2D\Drawing1.dwg]</span>
<div class="btn" style="left:692px;top:8px;width:16px;height:14px;"><svg class="i" style="left:0;top:0" width="16" height="14" shape-rendering="crispEdges"><path d="M4 9h6v2h-6z"/></svg></div>
<div class="btn" style="left:708px;top:8px;width:16px;height:14px;"><svg class="i" style="left:0;top:0" width="16" height="14" shape-rendering="crispEdges"><path d="M3 2h9v9h-9zM4 4v6h7v-6z" fill-rule="evenodd"/></svg></div>
<div class="btn" style="left:726px;top:8px;width:16px;height:14px;"><svg class="i" style="left:0;top:0" width="16" height="14" shape-rendering="crispEdges"><path d="M4 3h2v1h1v1h2v-1h1v-1h2v1h-1v1h-1v1h-1v1h1v1h1v1h1v1h-2v-1h-1v-1h-2v1h-1v1h-2v-1h1v-1h1v-1h1v-1h-1v-1h-1v-1h-1z"/></svg></div>
<svg class="i" style="left:10px;top:26px" width="16" height="16" viewBox="0 0 16 16"><path d="M.5 1.500h13v10h-13z" fill="#e4e2dc" stroke="#707070"/><path d="M2 3h14v7l-4 4h-10z" fill="#0c8ad0"/><path d="M2 3h2v11h-2z" fill="#2a62c0"/><path d="M2 13h10v1h-10z" fill="#075a94"/><path d="M16 10l-4 4v-3.500z" fill="#222"/><path d="M12 10h3.500l-3.500 3.500z" fill="#f4f4f4"/><path d="M9 4h1v9h-1zM5 7h10v1h-10z" fill="#fff"/><circle cx="9.500" cy="7.500" r="1.700" fill="#fff"/><rect x="9" y="7" width="1" height="1" fill="#000"/><path d="M6 5h1v1h-1zM12 5h1v1h-1zM6 9h1v1h-1zM6 12h1v1h-1z" fill="#8fd0f4"/></svg>
<svg class="t" role="img" aria-label="文件" style="left:32px;top:28px;color:#000" width="26" height="12"><use href="#g6587" x="0"/><use href="#g4ef6" x="12"/></svg>
<span class="m" style="left:55px;top:28px;letter-spacing:-0.015px;">(<u>F</u>)</span>
<svg class="t" role="img" aria-label="编辑" style="left:82px;top:28px;color:#000" width="26" height="12"><use href="#g7f16" x="0"/><use href="#g8f91" x="12"/></svg>
<span class="m" style="left:105px;top:28px;letter-spacing:-0.221px;">(<u>E</u>)</span>
<svg class="t" role="img" aria-label="视图" style="left:132px;top:28px;color:#000" width="26" height="12"><use href="#g89c6" x="0"/><use href="#g56fe" x="12"/></svg>
<span class="m" style="left:155px;top:28px;letter-spacing:-0.221px;">(<u>V</u>)</span>
<svg class="t" role="img" aria-label="插入" style="left:182px;top:28px;color:#000" width="26" height="12"><use href="#g63d2" x="0"/><use href="#g5165" x="12"/></svg>
<span class="m" style="left:205px;top:28px;letter-spacing:0.706px;">(<u>I</u>)</span>
<svg class="t" role="img" aria-label="格式" style="left:231px;top:28px;color:#000" width="26" height="12"><use href="#g683c" x="0"/><use href="#g5f0f" x="12"/></svg>
<span class="m" style="left:254px;top:28px;letter-spacing:-0.294px;">(<u>O</u>)</span>
<svg class="t" role="img" aria-label="工具" style="left:283px;top:28px;color:#000" width="26" height="12"><use href="#g5de5" x="0"/><use href="#g5177" x="12"/></svg>
<span class="m" style="left:306px;top:28px;letter-spacing:-0.182px;">(<u>T</u>)</span>
<svg class="t" role="img" aria-label="绘图" style="left:332px;top:28px;color:#000" width="26" height="12"><use href="#g7ed8" x="0"/><use href="#g56fe" x="12"/></svg>
<span class="m" style="left:355px;top:28px;letter-spacing:-0.090px;">(<u>D</u>)</span>
<svg class="t" role="img" aria-label="标注" style="left:383px;top:28px;color:#000" width="26" height="12"><use href="#g6807" x="0"/><use href="#g6ce8" x="12"/></svg>
<span class="m" style="left:406px;top:28px;letter-spacing:-0.090px;">(<u>N</u>)</span>
<svg class="t" role="img" aria-label="修改" style="left:434px;top:28px;color:#000" width="26" height="12"><use href="#g4fee" x="0"/><use href="#g6539" x="12"/></svg>
<span class="m" style="left:457px;top:28px;letter-spacing:0.003px;">(<u>M</u>)</span>
<svg class="t" role="img" aria-label="燕秀工具箱" style="left:486px;top:28px;color:#000" width="62" height="12"><use href="#g71d5" x="0"/><use href="#g79c0" x="12"/><use href="#g5de5" x="24"/><use href="#g5177" x="36"/><use href="#g7bb1" x="48"/></svg>
<span class="m" style="left:546px;top:28px;letter-spacing:-0.082px;">2.81(<u>Y</u>)</span>
<svg class="t" role="img" aria-label="小帮手" style="left:616px;top:28px;color:#000" width="38" height="12"><use href="#g5c0f" x="0"/><use href="#g5e2e" x="12"/><use href="#g624b" x="24"/></svg>
<span class="m" style="left:594px;top:28px;letter-spacing:-0.741px;">CAD</span>
<span class="m" style="left:651px;top:28px;letter-spacing:-0.388px;">(<u>S</u>)</span>
<svg class="t" role="img" aria-label="窗口" style="left:677px;top:28px;color:#000" width="26" height="12"><use href="#g7a97" x="0"/><use href="#g53e3" x="12"/></svg>
<span class="m" style="left:700px;top:28px;letter-spacing:0.097px;">(<u>W</u>)</span>
<svg class="t" role="img" aria-label="标记" style="left:53px;top:46px;color:#000" width="26" height="12"><use href="#g6807" x="0"/><use href="#g8bb0" x="12"/></svg>
<span class="m" style="left:12px;top:46px;letter-spacing:-0.130px;">Acrobat</span>
<span class="m" style="left:76px;top:46px;letter-spacing:-0.090px;">(<u>C</u>)</span>
<span class="m" style="left:104px;top:46px;letter-spacing:-0.461px;">Adobe PDF(<u>B</u>)</span>
<svg class="t" role="img" aria-label="帮助" style="left:183px;top:46px;color:#000" width="26" height="12"><use href="#g5e2e" x="0"/><use href="#g52a9" x="12"/></svg>
<span class="m" style="left:206px;top:46px;letter-spacing:0.077px;">(<u>H</u>)</span>
<div class="btn" style="left:692px;top:45px;width:16px;height:14px;"><svg class="i" style="left:0;top:0" width="16" height="14" shape-rendering="crispEdges"><path d="M4 9h6v2h-6z"/></svg></div>
<div class="btn" style="left:708px;top:45px;width:16px;height:14px;"><svg class="i" style="left:0;top:0" width="16" height="14" shape-rendering="crispEdges"><path d="M5 2h6v6h-2v-1h1v-3h-4v1h-1zM3 5h6v6h-6zM4 7v3h4v-3z" fill-rule="evenodd"/></svg></div>
<div class="btn" style="left:726px;top:45px;width:16px;height:14px;"><svg class="i" style="left:0;top:0" width="16" height="14" shape-rendering="crispEdges"><path d="M4 3h2v1h1v1h2v-1h1v-1h2v1h-1v1h-1v1h-1v1h1v1h1v1h1v1h-2v-1h-1v-1h-2v1h-1v1h-2v-1h1v-1h1v-1h1v-1h-1v-1h-1v-1h-1z"/></svg></div>
<div class="r1" style="left:6px;top:62px;width:345px;height:27px;"></div>
<div class="grip" style="left:9px;top:64px;width:3px;height:24px;"></div>
<div class="grip" style="left:13px;top:64px;width:3px;height:24px;"></div>
<div class="r1" style="left:352px;top:62px;width:316px;height:27px;"></div>
<div class="grip" style="left:355px;top:64px;width:3px;height:24px;"></div>
<div class="grip" style="left:359px;top:64px;width:3px;height:24px;"></div>
<div class="dk" style="left:67px;top:68px;width:1px;height:18px;"></div>
<div class="hl" style="left:68px;top:68px;width:1px;height:18px;"></div>
<div class="r1" style="left:641px;top:66px;width:23px;height:22px;"></div>
<svg width="0" height="0" style="position:absolute"><defs><radialGradient id="gsp" cx=".35" cy=".3" r=".8"><stop offset="0" stop-color="#7be0a0"/><stop offset=".45" stop-color="#1fb060"/><stop offset="1" stop-color="#0a7038"/></radialGradient><radialGradient id="gye" cx=".4" cy=".35" r=".7"><stop offset="0" stop-color="#ffe860"/><stop offset="1" stop-color="#c89800"/></radialGradient><linearGradient id="glb" x1="0" y1="0" x2="1" y2="1"><stop offset="0" stop-color="#fff"/><stop offset="1" stop-color="#a8ccf0"/></linearGradient><linearGradient id="grb" x1="0" y1="0" x2="1" y2="0"><stop offset="0" stop-color="#f010e0"/><stop offset=".2" stop-color="#2020f0"/><stop offset=".4" stop-color="#10c8e8"/><stop offset=".58" stop-color="#20d020"/><stop offset=".78" stop-color="#f0e010"/><stop offset="1" stop-color="#f03010"/></linearGradient><marker id="ah" viewBox="0 0 6 6" refX="5.500" refY="3" markerWidth="4.500" markerHeight="4.500" orient="auto-start-reverse" markerUnits="userSpaceOnUse"><path d="M0 .4L6 3L0 5.600z"/></marker><marker id="ahs" viewBox="0 0 6 6" refX="5.500" refY="3" markerWidth="3.600" markerHeight="3.600" orient="auto-start-reverse" markerUnits="userSpaceOnUse"><path d="M0 .4L6 3L0 5.600z"/></marker><marker id="ahb" viewBox="0 0 6 6" refX="5.500" refY="3" markerWidth="4.500" markerHeight="4.500" orient="auto-start-reverse" markerUnits="userSpaceOnUse"><path d="M0 .4L6 3L0 5.600z" fill="#2264b4"/></marker></defs></svg>
<svg class="i" style="left:22px;top:69px" width="16" height="16" viewBox="0 0 16 16"><ellipse cx="8" cy="8.300" rx="9.800" ry="2.600" transform="rotate(-42 8 8.300)" fill="none" stroke="#88a8e4" stroke-width=".9"/><circle cx="7.800" cy="8.400" r="5.300" fill="url(#gsp)"/><path d="M2.500 11.500C-.5 14.500 .5 16 4 13.500 7.500 11 11 7.500 14.800 2.200" fill="none" stroke="#6690dc" stroke-width="1.800"/><path d="M2.300 12C.4 14 1 15 4 13 7.500 10.600 11 7 14.500 2.300" fill="none" stroke="#f4f8ff" stroke-width="1.100"/><circle cx="12.800" cy="4.900" r="2.500" fill="url(#gye)"/></svg>
<svg class="i" style="left:45px;top:69px" width="16" height="16" viewBox="0 0 16 16"><rect x="5.500" y=".5" width="10" height="14" fill="#fff" stroke="#3a6cc0"/><rect x="5" y="0" width="11" height="2.500" fill="#1c3f94"/><path d="M7 3.500h7.500v1h-7.500zM7 5.500h7.500v1h-7.500zM7 7.500h7.500v1h-7.500zM7 9.500h7.500v1h-7.500zM7 11.500h7.500v1h-7.500z" fill="#111"/><path d="M14.500 2.500h1v12h-1z" fill="#7aa4e0"/><path d="M4 -.5L6.500 3.500H5.500L7.300 7H6.200L8 10.500H6.800L8.500 13.500H-.2L1.500 10.500H.4L2.200 7H1.200L3 3.500H2z" fill="#18b838"/><path d="M4 .5L5.500 3.500H4.500L6 7H5L6.500 10.500H5.300L6.500 13H4z" fill="#0c7c28"/><rect x="3.300" y="13.500" width="1.700" height="2.500" fill="#6a2410"/><rect x="4" y="7.500" width="1.200" height="2.500" fill="#2848c0"/></svg>
<svg class="i" style="left:74px;top:69px" width="16" height="16" viewBox="0 0 16 16"><path d="M9.200 4.700L16 10.200L11.700 14.800L6.100 9z" fill="url(#glb)" stroke="#2864b8" stroke-width="1.100"/><path d="M-.5 .5L2 -.3L6 1.200L9.500 3.200L10.600 6L10.600 9.300L9 9.400L7.600 7.600L6 9.200L4.400 8L3.300 6.400L1.800 5L.3 2.800z" fill="#b48888"/><path d="M-.5 .5L2 -.3L6 1.200L9.500 3.200L5 3z" fill="#c8a0a0"/><path d="M4 6.500L5.300 9L7.300 7.200z" fill="#8a5c5c"/><path d="M7 15.400L1.800 10.700" stroke="#444" stroke-width="1.200" fill="none"/><path d="M1 9.800L4.300 10.400L1.700 13z" fill="#444"/></svg>
<svg class="i" style="left:97px;top:69px" width="16" height="16" viewBox="0 0 16 16"><path d="M4.500 3.500L7.500 .5H15.500V8.500L12.500 11.500H4.500z" fill="#a8d0f4" stroke="#000" stroke-width="1.300" stroke-linejoin="round"/><path d="M4.500 3.500H12.500V11.500M12.500 3.500L15.500 .5" fill="none" stroke="#555" stroke-width="1"/><path d="M5.200 4.200H11.800V10.800H5.200z" fill="#b8dcfc"/><path d="M.4 8.700L3.800 12.600L10.600 6.600" fill="none" stroke="#0a8c3a" stroke-width="2.700"/></svg>
<svg class="i" style="left:120px;top:69px" width="16" height="16" viewBox="0 0 16 16"><rect x=".6" y="3.600" width="14.800" height="11.800" fill="#fff" stroke="#3a72c4" stroke-width="1.200"/><rect x="10" y="5" width="4.800" height="9.800" fill="#c4dcf4"/><path d="M2.200 8L4.500 6.200H10.800V13L8.500 14.800H2.200z" fill="#3c9cf0"/><path d="M2.200 8L4.500 6.200H10.800L8.500 8z" fill="#9cd4fc"/><path d="M8.500 8L10.800 6.200V13L8.500 14.800z" fill="#1c70c8"/><path d="M11.800 -.2L14.900 1.800L8.600 11.500L5.500 9.500z" fill="#c88408"/><path d="M11.800 -.2L13.200 .7L6.900 10.400L5.500 9.500z" fill="#fcd848"/><path d="M5.500 9.500L8.600 11.500L4.300 14.200z" fill="#281808"/><path d="M11.800 -.2L14.900 1.800L15.900 .2L12.800 -1.800z" fill="#f07898"/></svg>
<svg class="i" style="left:143px;top:69px" width="16" height="16" viewBox="0 0 16 16"><path d="M5.800 .9H12.500L15.200 3.600V12.300H5.800z" fill="url(#glb)" stroke="#3a6cba" stroke-width="1.100"/><path d="M12.500 .9V3.600H15.200" fill="none" stroke="#3a6cba" stroke-width=".9"/><rect x="1.800" y="4.900" width="8" height="5.200" fill="#f6ee88" stroke="#2458ac" stroke-width="1.200"/><circle cx="9.300" cy="12" r="3.300" fill="#f2ea84" stroke="#2458ac" stroke-width="1.200"/><rect x="0" y="9.300" width="2" height="2.200" fill="#0c60d8"/></svg>
<svg class="i" style="left:166px;top:69px" width="16" height="16" viewBox="0 0 16 16"><path d="M0 7h7v2h-7zM8 7h2v2h-2zM11 7h2v2h-2zM14 7h2v2h-2z" fill="#404040" shape-rendering="crispEdges"/></svg>
<svg class="i" style="left:189px;top:69px" width="16" height="16" viewBox="0 0 16 16"><path d="M.4 13.600L12.700 1.200M3.400 15.500L15.600 3.500" stroke="#000" stroke-width="1.500" fill="none"/></svg>
<svg class="i" style="left:212px;top:69px" width="16" height="16" viewBox="0 0 16 16"><path d="M.3 1.200L14.600 15.500M14.600 1.200L.3 15.500" stroke="#000" stroke-width="1.500" fill="none"/><rect x="5.300" y="6.100" width="4.600" height="4.600" fill="#1874dc"/><rect x="6.600" y="7.400" width="2" height="2" fill="#fff"/></svg>
<svg class="i" style="left:235px;top:69px" width="16" height="16" viewBox="0 0 16 16"><rect x=".3" y=".3" width="15.400" height="15.400" fill="#fff"/><rect x="11.500" y="1.400" width="3.200" height="14.300" fill="#d4e4f6"/><path d="M.3 .8H15.200V15.700" fill="none" stroke="#3a72c4" stroke-width="1.200"/><rect x="1" y="6" width="10" height="9" fill="#fff"/><path d="M0 5h1v1h-1zM0 7h1v1h-1zM0 9h1v1h-1zM0 11h1v1h-1zM0 13h1v1h-1zM0 15h1v1h-1zM2 5h1v1h-1zM2 15h1v1h-1zM4 5h1v1h-1zM4 15h1v1h-1zM6 5h1v1h-1zM6 15h1v1h-1zM8 5h1v1h-1zM8 15h1v1h-1zM10 5h1v1h-1zM10 15h1v1h-1zM11 6h1v1h-1zM11 8h1v1h-1zM11 10h1v1h-1zM11 12h1v1h-1zM11 14h1v1h-1z" fill="#000" shape-rendering="crispEdges"/><path d="M5.800 6.800L8.600 13.700H7L6.500 12.300H4L3.500 13.700H1.900L4.700 6.800zM5.250 8.500L4.400 11.100H6.100z" fill="#000"/></svg>
<svg class="i" style="left:258px;top:69px" width="16" height="16" viewBox="0 0 16 16"><rect x="0.6" y="0.6" width="6" height="6" fill="url(#glb)" stroke="#000" stroke-width="1.200"/><rect x="0.6" y="9.6" width="6" height="6" fill="url(#glb)" stroke="#000" stroke-width="1.200"/><rect x="9.6" y="0.6" width="6" height="6" fill="url(#glb)" stroke="#000" stroke-width="1.200"/><rect x="9.6" y="9.6" width="6" height="6" fill="url(#glb)" stroke="#000" stroke-width="1.200"/></svg>
<svg class="i" style="left:281px;top:69px" width="16" height="16" viewBox="0 0 16 16"><path d="M.6 6.500L3.600 3.500H10.600V12L7.600 15H.6z" fill="url(#glb)" stroke="#000" stroke-width="1.200" stroke-linejoin="round"/><path d="M.6 6.500H7.600V15M7.600 6.500L10.600 3.500" fill="none" stroke="#000" stroke-width="1"/><path d="M13.600 13.800V3" stroke="#12307c" stroke-width="1.600" fill="none"/><path d="M11.400 4.500L13.600 .2L15.800 4.500z" fill="#12307c"/></svg>
<svg class="i" style="left:304px;top:69px" width="16" height="16" viewBox="0 0 16 16"><path d="M4.500 1L10 .8L12.300 5.500L6 6.500z" fill="#f4f6fc" stroke="#90a4c8" stroke-width=".7"/><path d="M2 7.500L6 5.800L12.500 5L15 8L14.500 11L9 14L2.500 11.500z" fill="#b8c8e4" stroke="#6078a8" stroke-width=".8"/><path d="M2.200 8L9 10.500L14.800 8" fill="none" stroke="#eef2fa" stroke-width="1.200"/><path d="M6.500 12L10 13.600L13.500 11.600L11.500 11z" fill="#fff" stroke="#7088b4" stroke-width=".5"/><path d="M2.500 11.500L9 14L14.500 11" fill="none" stroke="#3c5890" stroke-width=".9"/></svg>
<svg class="i" style="left:327px;top:69px" width="16" height="16" viewBox="0 0 16 16"><rect x="0" y=".2" width="13.600" height="3.400" fill="url(#grb)"/><path d="M1.500 8.200C.8 5.800 4.500 5 5 6.800" fill="none" stroke="#e0cc30" stroke-width="1.500"/><path d="M5.200 10C3.800 8.600 1 9.300 1.800 10.800 2.500 12 5.500 11.500 5 13.200 4.600 14.600 2 14.500 1.200 13.500" fill="none" stroke="#3470c8" stroke-width="1.400"/><path d="M14.200 2.500V9" stroke="#2458a8" stroke-width="1.600"/><path d="M14.500 3L10.500 3L7 5L3.800 7.800L4.500 9L8 7.800L9.500 9.500L13 8.500L14.500 6z" fill="#eca8a0"/><path d="M3.800 7.800L4.500 9L6.500 8.300L5.500 6.500z" fill="#a87068"/><path d="M13.400 9.800L16 15.600H14.600L14.100 14.200H11.700L11.200 15.600H9.900L12.400 9.800zM12.900 11.200L12.100 13.200H13.700z" fill="#303848"/></svg>
<svg class="i" style="left:368px;top:69px" width="16" height="16" viewBox="0 0 16 16"><path d="M.5 10.200V15.800M15.500 10.200V15.800" stroke="#000" stroke-width="1.200"/><path d="M1 13H15" stroke="#000" stroke-width="1.200" marker-start="url(#ah)" marker-end="url(#ah)"/><path d="M4.500 11.800L8.800 7.200L11 9.200L8.500 11.800z" fill="#000"/><path d="M15.700 .3L11.200 6.400" stroke="#d88428" stroke-width="2"/><path d="M11.500 6L9.900 8.200" stroke="#f8f8f8" stroke-width="2.200"/><path d="M10 8L7 11" stroke="#000" stroke-width="2.200"/></svg>
<svg class="i" style="left:391px;top:69px" width="16" height="16" viewBox="0 0 16 16"><path d="M5.300 .3H6.900L11.600 12.200H10L8.700 8.700H3.500L2.200 12.200H.6zM6.100 1.800L4 7.400H8.200z" fill="#000"/><path d="M13.600 .8V15M11.400 .8H15.800M11.400 15.100H15.800" stroke="#1c4c94" stroke-width="1.300" fill="none"/></svg>
<svg class="i" style="left:414px;top:69px" width="16" height="16" viewBox="0 0 16 16"><path d="M2.600 14.200V1.200" stroke="#2264b4" stroke-width="1.300" marker-end="url(#ahb)"/><path d="M2.600 14.200H15.600" stroke="#2264b4" stroke-width="1.300" marker-end="url(#ahb)"/><path d="M2.600 14.200L11.500 5" stroke="#4a88d8" stroke-width="1"/><path d="M12.700 .5V6.700M9.600 3.600H15.800" stroke="#1c4c94" stroke-width="1"/><path d="M11.500 1.800L12.700 .2L13.900 1.800zM11.500 5.400L12.700 7L13.900 5.400zM10.900 2.400L9.300 3.600L10.900 4.800zM14.500 2.400L16.100 3.600L14.500 4.800z" fill="#1c4c94"/></svg>
<svg class="i" style="left:437px;top:69px" width="16" height="16" viewBox="0 0 16 16"><path d="M.7 .5V15.600M15.300 .5V15.600" stroke="#000" stroke-width="1.400"/><path d="M1.400 5.300H14.600" stroke="#000" stroke-width="1.400" marker-start="url(#ah)" marker-end="url(#ah)"/></svg>
<svg class="i" style="left:460px;top:69px" width="16" height="16" viewBox="0 0 16 16"><path d="M.2 5.400L5.800 .4M10.300 15.600L15.900 10.500" stroke="#000" stroke-width="1.500"/><path d="M3.400 3.400L13.100 12" stroke="#000" stroke-width="1.400" marker-start="url(#ah)" marker-end="url(#ah)"/></svg>
<svg class="i" style="left:483px;top:69px" width="16" height="16" viewBox="0 0 16 16"><path d="M1.200 3.300H11.500" stroke="#404040" stroke-width="2"/><path d="M2 4.500V12" stroke="#404040" stroke-width="1.800" stroke-dasharray="2 1.300"/><circle cx="13.600" cy="2.500" r="2.100" fill="#fff" stroke="#1874dc" stroke-width="1.400"/><rect x=".2" y="12.200" width="3.800" height="3.500" fill="#1080e4"/></svg>
<svg class="i" style="left:506px;top:69px" width="16" height="16" viewBox="0 0 16 16"><circle cx="8" cy="7.800" r="7.500" fill="none" stroke="#606060" stroke-width="1"/><path d="M9.200 8.800L3.600 3.200" stroke="#000" stroke-width="1.400" marker-end="url(#ah)"/></svg>
<svg class="i" style="left:529px;top:69px" width="16" height="16" viewBox="0 0 16 16"><circle cx="8" cy="7.800" r="7.500" fill="none" stroke="#606060" stroke-width="1"/><path d="M3.200 2.900L12.900 12.600" stroke="#000" stroke-width="1.400" marker-start="url(#ah)" marker-end="url(#ah)"/></svg>
<svg class="i" style="left:552px;top:69px" width="16" height="16" viewBox="0 0 16 16"><path d="M.2 15.400H16" stroke="#000" stroke-width="1.500"/><path d="M.3 9.500L10.200 .2" stroke="#000" stroke-width="1.400"/><path d="M8.300 3.300C11.800 5.500 13.800 9.500 14 14.200" fill="none" stroke="#000" stroke-width="1.100" marker-start="url(#ah)" marker-end="url(#ah)"/></svg>
<svg class="i" style="left:575px;top:69px" width="16" height="16" viewBox="0 0 16 16"><path d="M.7 .4V14.600M10 5V14.600" stroke="#000" stroke-width="1.300"/><path d="M1.200 3H14.600" stroke="#000" stroke-width="1.200" marker-start="url(#ahs)" marker-end="url(#ahs)"/><path d="M1.200 10.100H9.600" stroke="#000" stroke-width="1.200" marker-start="url(#ahs)" marker-end="url(#ahs)"/></svg>
<svg class="i" style="left:598px;top:69px" width="16" height="16" viewBox="0 0 16 16"><path d="M.6 .4V14.600M8.400 .4V14.600M15.600 .4V14.600" stroke="#000" stroke-width="1.300"/><path d="M1 4.400H8M8.800 4.400H15.200" stroke="#000" stroke-width="1.200" marker-start="url(#ahs)" marker-end="url(#ahs)"/></svg>
<svg class="i" style="left:621px;top:69px" width="16" height="16" viewBox="0 0 16 16"><path d="M4.200 3L9.800 1.600L11.200 5.800H13.400L14.200 15.400L7.400 9.600L9.200 9L4.800 5.600z" fill="#f0d810" stroke="#486c10" stroke-width="1" stroke-linejoin="round"/><path d="M7 3.600L10 7.400L12 8.400L13 13" fill="none" stroke="#fffcb0" stroke-width="1"/><path d="M8.500 3.200L1.500 6.300" stroke="#000" stroke-width="1.300"/><path d="M0 7.400L3.600 4L3.800 7.300z" fill="#000"/><path d="M13.800 .8L16.300 5.800H15L14.600 4.700H12.300L11.900 5.800H10.600L13 .8zM13.400 2.200L12.700 3.800H14.200z" fill="#1c48b0"/></svg>
<svg class="i" style="left:644px;top:69px" width="16" height="16" viewBox="0 0 16 16"><g fill="#1c4c94" shape-rendering="crispEdges"><path d="M5 0h1v1h1v3h-1v1h-1v-1h-1v-3h1zM5 1v3h1v-3z" fill-rule="evenodd"/><path d="M13 0h1v1h-1zM15 0h1v1h-1zM14 1h1v3h-1zM13 4h1v1h-1zM15 4h1v1h-1z"/><path d="M0 5h1v2h-1zM2 5h1v2h-1zM1 7h1v3h-1z"/><path d="M1 12h1v1h1v3h-1v1h-1v-1h-1v-3h1zM1 13v3h1v-3z" fill-rule="evenodd"/></g><path d="M5.600 6.500V15.200M4.200 14.500H15.600M6 6.400L11 10.300H15.600M14.600 5.300V9.500M11 10.300V15.200" stroke="#000" stroke-width="1.300" fill="none"/><path d="M4 7.500L5.600 5L7.200 7.500zM6 12.900L3.600 14.500L6 16.100z" fill="#000"/></svg>
<div class="sunk" style="left:6px;top:90px;width:738px;height:461px;"></div>
<div class="" style="left:8px;top:92px;width:718px;height:443px;background:#000"></div>
<div class="" style="left:8px;top:535px;width:718px;height:14px;background:#d4d0c8"></div>
<div class="" style="left:486px;top:534px;width:240px;height:1px;background:#d4d0c8"></div>
<div class="" style="left:726px;top:534px;width:16px;height:15px;background:#d4d0c8"></div>
<div class="dith" style="left:726px;top:92px;width:16px;height:442px;"></div>
<div class="sb" style="left:726px;top:92px;width:16px;height:16px;"><svg class="i" style="left:0;top:0" width="16" height="16" shape-rendering="crispEdges"><path d="M4 10h7v-1h-1v-1h-1v-1h-1v-1h-1v1h-1v1h-1v1h-1z"/></svg></div>
<div class="sb" style="left:726px;top:502px;width:16px;height:16px;"></div>
<div class="sb" style="left:726px;top:518px;width:16px;height:16px;"><svg class="i" style="left:0;top:0" width="16" height="16" shape-rendering="crispEdges"><path d="M4 6h7v1h-1v1h-1v1h-1v1h-1v-1h-1v-1h-1v-1h-1z"/></svg></div>
<div class="dith" style="left:487px;top:534px;width:239px;height:15px;"></div>
<div class="r1" style="left:481px;top:534px;width:5px;height:15px;background:#d4d0c8"></div>
<div class="sb" style="left:487px;top:534px;width:16px;height:15px;"><svg class="i" style="left:0;top:0" width="16" height="16" shape-rendering="crispEdges"><path d="M7 5h1v5h-1v-1h-1v-1h-1v-1h1v-1h1z"/></svg></div>
<div class="sb" style="left:606px;top:534px;width:16px;height:15px;"></div>
<div class="sb" style="left:710px;top:534px;width:16px;height:15px;"><svg class="i" style="left:0;top:0" width="16" height="16" shape-rendering="crispEdges"><path d="M7 5h1v1h1v1h1v1h-1v1h-1v1h-1z"/></svg></div>
<div class="r1" style="left:8px;top:535px;width:17px;height:14px;"><svg class="i" style="left:0;top:0" width="17" height="14" shape-rendering="crispEdges"><path d="M4 3h1v9h-1zM10 3h1v9h-1v-1h-1v-1h-1v-1h-1v-1h-1v-1h1v-1h1v-1h1v-1h1z"/></svg></div>
<div class="r1" style="left:26px;top:535px;width:17px;height:14px;"><svg class="i" style="left:0;top:0" width="17" height="14" shape-rendering="crispEdges"><path d="M10 3h1v9h-1v-1h-1v-1h-1v-1h-1v-1h-1v-1h1v-1h1v-1h1v-1h1z"/></svg></div>
<div class="r1" style="left:44px;top:535px;width:17px;height:14px;"><svg class="i" style="left:0;top:0" width="17" height="14" shape-rendering="crispEdges"><path d="M6 3h1v1h1v1h1v1h1v1h1v1h-1v1h-1v1h-1v1h-1v1h-1z"/></svg></div>
<div class="r1" style="left:62px;top:535px;width:17px;height:14px;"><svg class="i" style="left:0;top:0" width="17" height="14" shape-rendering="crispEdges"><path d="M6 3h1v1h1v1h1v1h1v1h1v1h-1v1h-1v1h-1v1h-1v1h-1zM12 3h1v9h-1z"/></svg></div>
<svg class="i" style="left:80px;top:534px" width="140" height="16" viewBox="80 534 140 16"><path d="M83.500 534L88 548.500H119.500L124 534z" fill="#000"/><path d="M123.500 535L126.500 548.500H165.500L169 535M168.500 535L171.500 548.500H210.500L214.500 534.500" fill="none" stroke="#000" stroke-width="1"/><path d="M120.500 548.500L124.500 534.500" stroke="#000" stroke-width="1"/></svg>
<svg class="t" role="img" aria-label="模型" style="left:91px;top:536px;color:#fff" width="28" height="12"><use href="#g6a21b" x="0"/><use href="#g578bb" x="13"/></svg>
<svg class="t" role="img" aria-label="布局" style="left:130px;top:536px;color:#000" width="26" height="12"><use href="#g5e03" x="0"/><use href="#g5c40" x="12"/></svg>
<svg class="t" role="img" aria-label="布局" style="left:175px;top:536px;color:#000" width="26" height="12"><use href="#g5e03" x="0"/><use href="#g5c40" x="12"/></svg>
<span class="m" style="left:153.5px;top:536px;">1</span>
<span class="m" style="left:198.5px;top:536px;">2</span>
<svg class="i" style="left:8px;top:92px;overflow:hidden" width="718" height="442" viewBox="8 92 718 442" shape-rendering="crispEdges"><path d="M8 92.500H726M642.500 92V534M634.500 92V100.500H651" stroke="#fff" fill="none"/><path d="M371.500 128V147.500H380.500V128M373.500 134V145.500H378.500V134" stroke="#808080" fill="none"/><path d="M371.500 498V480.500H379.500V485.500H380.500V498M373.500 498V486.500H378.500V498" stroke="#808080" fill="none"/><path d="M218 313.500H442" stroke="#f00" stroke-dasharray="26 4.200 5.400 4.200" stroke-dashoffset="12.800" fill="none"/><path d="M442 313.500H533" stroke="#f00" stroke-dasharray="26 4.200 5.400 4.200" stroke-dashoffset="1.200" fill="none"/><path d="M375.500 128V313" stroke="#f00" stroke-dasharray="38.500 2.500 3 2.500" stroke-dashoffset="29.500" fill="none"/><path d="M375.500 313V498" stroke="#f00" stroke-dasharray="38.500 2.500 3 2.500" stroke-dashoffset="30.700" fill="none"/><path d="M218.500 128.500H279.500L281.500 134.500H312.500L314.500 128.500H532.500V498.500H472.500V495A2.500 2.500 0 0 0 470 492.500H440A2.500 2.500 0 0 0 437.500 495V498.500H218.500z" stroke="#fff" fill="none"/><path d="M286.500 134.500V175A10 10 0 0 0 296.500 185.500H455.500A6 6 0 0 1 461.500 191.500V490.500H465.500" stroke="#fff" fill="none"/><path d="M290.500 134.500V173A8 8 0 0 0 298.500 181.500H454.500A11 11 0 0 1 465.500 192.500V492.500" stroke="#fff" fill="none"/><path d="M290.500 138.5H295A2 2 0 0 1 295 142.5H290.500" stroke="#fff" fill="none"/><rect x="291.500" y="139.5" width="2" height="2" fill="#f0f"/><path d="M290.500 165.5H295A2 2 0 0 1 295 169.5H290.500" stroke="#fff" fill="none"/><rect x="291.500" y="166.5" width="2" height="2" fill="#f0f"/><path d="M302 185.500V190.500L304 192.500L306 190.500V185.500" stroke="#fff" fill="none"/><rect x="303" y="187" width="2" height="3" fill="#f0f"/><path d="M349.7 185.500V190.500L351.7 192.500L353.7 190.500V185.500" stroke="#fff" fill="none"/><rect x="350.7" y="187" width="2" height="3" fill="#f0f"/><path d="M397.5 185.500V190.500L399.5 192.500L401.5 190.500V185.500" stroke="#fff" fill="none"/><rect x="398.5" y="187" width="2" height="3" fill="#f0f"/><path d="M445.2 185.500V190.500L447.2 192.500L449.2 190.500V185.500" stroke="#fff" fill="none"/><rect x="446.2" y="187" width="2" height="3" fill="#f0f"/><path d="M461.500 197.5H456.500A2 2 0 0 0 456.500 201.5H461.500" stroke="#fff" fill="none"/><rect x="458" y="198.5" width="2" height="2" fill="#f0f"/><path d="M461.500 269H456.500A2 2 0 0 0 456.500 273H461.500" stroke="#fff" fill="none"/><rect x="458" y="270" width="2" height="2" fill="#f0f"/><path d="M461.500 340.6H456.500A2 2 0 0 0 456.500 344.6H461.500" stroke="#fff" fill="none"/><rect x="458" y="341.6" width="2" height="2" fill="#f0f"/><path d="M461.500 412.5H456.500A2 2 0 0 0 456.500 416.5H461.500" stroke="#fff" fill="none"/><rect x="458" y="413.5" width="2" height="2" fill="#f0f"/><path d="M461.500 484H456.500A2 2 0 0 0 456.500 488H461.500" stroke="#fff" fill="none"/><rect x="458" y="485" width="2" height="2" fill="#f0f"/><path d="M300 134h2v4h-2zM308 134h2v4h-2z" fill="#f0f"/><path d="M443.500 489V493M451.500 489V493" stroke="#f00" fill="none"/><path d="M517.500 484.500H520.500V495.500H509.500V492.500H517.500z" stroke="#fff" fill="none"/><circle cx="268.5" cy="180.5" r="6.300" stroke="#909090" fill="none"/><circle cx="268.5" cy="180.5" r="4.300" stroke="#fff" fill="none"/><path d="M261.5 180.5H275.5M268.5 173.5V187.5" stroke="#f00" fill="none"/><rect x="265.0" y="179.0" width="6" height="3" fill="#f0f"/><circle cx="268.5" cy="446.5" r="6.300" stroke="#909090" fill="none"/><circle cx="268.5" cy="446.5" r="4.300" stroke="#fff" fill="none"/><path d="M261.5 446.5H275.5M268.5 439.5V453.5" stroke="#f00" fill="none"/><rect x="265.0" y="445.0" width="6" height="3" fill="#f0f"/><circle cx="482.5" cy="180.5" r="6.300" stroke="#909090" fill="none"/><circle cx="482.5" cy="180.5" r="4.300" stroke="#fff" fill="none"/><path d="M475.5 180.5H489.5M482.5 173.5V187.5" stroke="#f00" fill="none"/><rect x="479.0" y="179.0" width="6" height="3" fill="#f0f"/><circle cx="482.5" cy="446.5" r="6.300" stroke="#909090" fill="none"/><circle cx="482.5" cy="446.5" r="4.300" stroke="#fff" fill="none"/><path d="M475.5 446.5H489.5M482.5 439.5V453.5" stroke="#f00" fill="none"/><rect x="479.0" y="445.0" width="6" height="3" fill="#f0f"/><circle cx="268.5" cy="234.5" r="6.300" stroke="#909090" fill="none"/><circle cx="268.5" cy="234.5" r="4.300" stroke="#fff" fill="none"/><path d="M261.5 234.5H275.5M268.5 227.5V241.5" stroke="#f00" fill="none"/><rect x="265.0" y="233.0" width="6" height="3" fill="#f0f"/><circle cx="268.5" cy="392.5" r="6.300" stroke="#909090" fill="none"/><circle cx="268.5" cy="392.5" r="4.300" stroke="#fff" fill="none"/><path d="M261.5 392.5H275.5M268.5 385.5V399.5" stroke="#f00" fill="none"/><rect x="265.0" y="391.0" width="6" height="3" fill="#f0f"/><circle cx="482.5" cy="234.5" r="6.300" stroke="#909090" fill="none"/><circle cx="482.5" cy="234.5" r="4.300" stroke="#fff" fill="none"/><path d="M475.5 234.5H489.5M482.5 227.5V241.5" stroke="#f00" fill="none"/><rect x="479.0" y="233.0" width="6" height="3" fill="#f0f"/><circle cx="482.5" cy="392.5" r="6.300" stroke="#909090" fill="none"/><circle cx="482.5" cy="392.5" r="4.300" stroke="#fff" fill="none"/><path d="M475.5 392.5H489.5M482.5 385.5V399.5" stroke="#f00" fill="none"/><rect x="479.0" y="391.0" width="6" height="3" fill="#f0f"/><circle cx="268.5" cy="287.5" r="6.300" stroke="#909090" fill="none"/><circle cx="268.5" cy="287.5" r="4.300" stroke="#fff" fill="none"/><path d="M261.5 287.5H275.5M268.5 280.5V294.5" stroke="#f00" fill="none"/><rect x="265.0" y="286.0" width="6" height="3" fill="#f0f"/><circle cx="268.5" cy="339.5" r="6.300" stroke="#909090" fill="none"/><circle cx="268.5" cy="339.5" r="4.300" stroke="#fff" fill="none"/><path d="M261.5 339.5H275.5M268.5 332.5V346.5" stroke="#f00" fill="none"/><rect x="265.0" y="338.0" width="6" height="3" fill="#f0f"/><circle cx="482.5" cy="287.5" r="6.300" stroke="#909090" fill="none"/><circle cx="482.5" cy="287.5" r="4.300" stroke="#fff" fill="none"/><path d="M475.5 287.5H489.5M482.5 280.5V294.5" stroke="#f00" fill="none"/><rect x="479.0" y="286.0" width="6" height="3" fill="#f0f"/><circle cx="482.5" cy="339.5" r="6.300" stroke="#909090" fill="none"/><circle cx="482.5" cy="339.5" r="4.300" stroke="#fff" fill="none"/><path d="M475.5 339.5H489.5M482.5 332.5V346.5" stroke="#f00" fill="none"/><rect x="479.0" y="338.0" width="6" height="3" fill="#f0f"/><circle cx="268.5" cy="151.5" r="4.400" stroke="#909090" fill="none"/><path d="M271.3 152.6L269.6 154.3L267.4 154.3L265.7 152.6L265.7 150.4L267.4 148.7L269.6 148.7L271.3 150.4z" stroke="#fff" fill="none"/><path d="M263.5 151.5H273.5M268.5 146.5V156.5" stroke="#f00" fill="none"/><rect x="266.0" y="150.0" width="5" height="2" fill="#f0f"/><circle cx="268.5" cy="475.5" r="4.400" stroke="#909090" fill="none"/><path d="M271.3 476.6L269.6 478.3L267.4 478.3L265.7 476.6L265.7 474.4L267.4 472.7L269.6 472.7L271.3 474.4z" stroke="#fff" fill="none"/><path d="M263.5 475.5H273.5M268.5 470.5V480.5" stroke="#f00" fill="none"/><rect x="266.0" y="474.0" width="5" height="2" fill="#f0f"/><circle cx="482.5" cy="151.5" r="4.400" stroke="#909090" fill="none"/><path d="M485.3 152.6L483.6 154.3L481.4 154.3L479.7 152.6L479.7 150.4L481.4 148.7L483.6 148.7L485.3 150.4z" stroke="#fff" fill="none"/><path d="M477.5 151.5H487.5M482.5 146.5V156.5" stroke="#f00" fill="none"/><rect x="480.0" y="150.0" width="5" height="2" fill="#f0f"/><circle cx="482.5" cy="475.5" r="4.400" stroke="#909090" fill="none"/><path d="M485.3 476.6L483.6 478.3L481.4 478.3L479.7 476.6L479.7 474.4L481.4 472.7L483.6 472.7L485.3 474.4z" stroke="#fff" fill="none"/><path d="M477.5 475.5H487.5M482.5 470.5V480.5" stroke="#f00" fill="none"/><rect x="480.0" y="474.0" width="5" height="2" fill="#f0f"/><path d="M272.7 196.6L271.5 198.5L269.6 199.7L267.4 199.7L265.5 198.5L264.3 196.6L264.3 194.4L265.5 192.5L267.4 191.3L269.6 191.3L271.5 192.5L272.7 194.4z" stroke="#fff" fill="none"/><path d="M263.5 195.5H273.5M268.5 190.5V200.5" stroke="#f00" fill="none"/><path d="M272.7 432.6L271.5 434.5L269.6 435.7L267.4 435.7L265.5 434.5L264.3 432.6L264.3 430.4L265.5 428.5L267.4 427.3L269.6 427.3L271.5 428.5L272.7 430.4z" stroke="#fff" fill="none"/><path d="M263.5 431.5H273.5M268.5 426.5V436.5" stroke="#f00" fill="none"/><path d="M486.7 196.6L485.5 198.5L483.6 199.7L481.4 199.7L479.5 198.5L478.3 196.6L478.3 194.4L479.5 192.5L481.4 191.3L483.6 191.3L485.5 192.5L486.7 194.4z" stroke="#fff" fill="none"/><path d="M477.5 195.5H487.5M482.5 190.5V200.5" stroke="#f00" fill="none"/><path d="M486.7 432.6L485.5 434.5L483.6 435.7L481.4 435.7L479.5 434.5L478.3 432.6L478.3 430.4L479.5 428.5L481.4 427.3L483.6 427.3L485.5 428.5L486.7 430.4z" stroke="#fff" fill="none"/><path d="M477.5 431.5H487.5M482.5 426.5V436.5" stroke="#f00" fill="none"/><circle cx="305.5" cy="160" r="4.400" stroke="#909090" fill="none"/><path d="M308.3 161.1L306.6 162.8L304.4 162.8L302.7 161.1L302.7 158.9L304.4 157.2L306.6 157.2L308.3 158.9z" stroke="#fff" fill="none"/><path d="M300.5 160H310.5M305.5 155V165" stroke="#f00" fill="none"/><rect x="303.0" y="158.5" width="5" height="2" fill="#f0f"/><circle cx="305.5" cy="467.0" r="4.400" stroke="#909090" fill="none"/><path d="M308.3 468.1L306.6 469.8L304.4 469.8L302.7 468.1L302.7 465.9L304.4 464.2L306.6 464.2L308.3 465.9z" stroke="#fff" fill="none"/><path d="M300.5 467.0H310.5M305.5 462.0V472.0" stroke="#f00" fill="none"/><rect x="303.0" y="465.5" width="5" height="2" fill="#f0f"/><circle cx="445.5" cy="160" r="4.400" stroke="#909090" fill="none"/><path d="M448.3 161.1L446.6 162.8L444.4 162.8L442.7 161.1L442.7 158.9L444.4 157.2L446.6 157.2L448.3 158.9z" stroke="#fff" fill="none"/><path d="M440.5 160H450.5M445.5 155V165" stroke="#f00" fill="none"/><rect x="443.0" y="158.5" width="5" height="2" fill="#f0f"/><circle cx="445.5" cy="467.0" r="4.400" stroke="#909090" fill="none"/><path d="M448.3 468.1L446.6 469.8L444.4 469.8L442.7 468.1L442.7 465.9L444.4 464.2L446.6 464.2L448.3 465.9z" stroke="#fff" fill="none"/><path d="M440.5 467.0H450.5M445.5 462.0V472.0" stroke="#f00" fill="none"/><rect x="443.0" y="465.5" width="5" height="2" fill="#f0f"/><path d="M312.9 203.9L310.9 205.9L308.1 205.9L306.1 203.9L306.1 201.1L308.1 199.1L310.9 199.1L312.9 201.1z" stroke="#c8c8c8" fill="none"/><path d="M305.0 202.5H314.0M309.5 198.0V207.0" stroke="#f00" fill="none"/><rect x="307.5" y="201.0" width="4" height="2" fill="#f0f"/><path d="M312.9 425.9L310.9 427.9L308.1 427.9L306.1 425.9L306.1 423.1L308.1 421.1L310.9 421.1L312.9 423.1z" stroke="#c8c8c8" fill="none"/><path d="M305.0 424.5H314.0M309.5 420.0V429.0" stroke="#f00" fill="none"/><rect x="307.5" y="423.0" width="4" height="2" fill="#f0f"/><path d="M444.9 203.9L442.9 205.9L440.1 205.9L438.1 203.9L438.1 201.1L440.1 199.1L442.9 199.1L444.9 201.1z" stroke="#c8c8c8" fill="none"/><path d="M437.0 202.5H446.0M441.5 198.0V207.0" stroke="#f00" fill="none"/><rect x="439.5" y="201.0" width="4" height="2" fill="#f0f"/><path d="M444.9 425.9L442.9 427.9L440.1 427.9L438.1 425.9L438.1 423.1L440.1 421.1L442.9 421.1L444.9 423.1z" stroke="#c8c8c8" fill="none"/><path d="M437.0 424.5H446.0M441.5 420.0V429.0" stroke="#f00" fill="none"/><rect x="439.5" y="423.0" width="4" height="2" fill="#f0f"/><path d="M338.9 203.9L336.9 205.9L334.1 205.9L332.1 203.9L332.1 201.1L334.1 199.1L336.9 199.1L338.9 201.1z" stroke="#c8c8c8" fill="none"/><path d="M331.0 202.5H340.0M335.5 198.0V207.0" stroke="#f00" fill="none"/><rect x="333.5" y="201.0" width="4" height="2" fill="#f0f"/><path d="M338.9 425.9L336.9 427.9L334.1 427.9L332.1 425.9L332.1 423.1L334.1 421.1L336.9 421.1L338.9 423.1z" stroke="#c8c8c8" fill="none"/><path d="M331.0 424.5H340.0M335.5 420.0V429.0" stroke="#f00" fill="none"/><rect x="333.5" y="423.0" width="4" height="2" fill="#f0f"/><path d="M418.9 203.9L416.9 205.9L414.1 205.9L412.1 203.9L412.1 201.1L414.1 199.1L416.9 199.1L418.9 201.1z" stroke="#c8c8c8" fill="none"/><path d="M411.0 202.5H420.0M415.5 198.0V207.0" stroke="#f00" fill="none"/><rect x="413.5" y="201.0" width="4" height="2" fill="#f0f"/><path d="M418.9 425.9L416.9 427.9L414.1 427.9L412.1 425.9L412.1 423.1L414.1 421.1L416.9 421.1L418.9 423.1z" stroke="#c8c8c8" fill="none"/><path d="M411.0 424.5H420.0M415.5 420.0V429.0" stroke="#f00" fill="none"/><rect x="413.5" y="423.0" width="4" height="2" fill="#f0f"/><path d="M338.9 277.9L336.9 279.9L334.1 279.9L332.1 277.9L332.1 275.1L334.1 273.1L336.9 273.1L338.9 275.1z" stroke="#c8c8c8" fill="none"/><path d="M331.0 276.5H340.0M335.5 272.0V281.0" stroke="#f00" fill="none"/><rect x="333.5" y="275.0" width="4" height="2" fill="#f0f"/><path d="M338.9 351.9L336.9 353.9L334.1 353.9L332.1 351.9L332.1 349.1L334.1 347.1L336.9 347.1L338.9 349.1z" stroke="#c8c8c8" fill="none"/><path d="M331.0 350.5H340.0M335.5 346.0V355.0" stroke="#f00" fill="none"/><rect x="333.5" y="349.0" width="4" height="2" fill="#f0f"/><path d="M418.9 277.9L416.9 279.9L414.1 279.9L412.1 277.9L412.1 275.1L414.1 273.1L416.9 273.1L418.9 275.1z" stroke="#c8c8c8" fill="none"/><path d="M411.0 276.5H420.0M415.5 272.0V281.0" stroke="#f00" fill="none"/><rect x="413.5" y="275.0" width="4" height="2" fill="#f0f"/><path d="M418.9 351.9L416.9 353.9L414.1 353.9L412.1 351.9L412.1 349.1L414.1 347.1L416.9 347.1L418.9 349.1z" stroke="#c8c8c8" fill="none"/><path d="M411.0 350.5H420.0M415.5 346.0V355.0" stroke="#f00" fill="none"/><rect x="413.5" y="349.0" width="4" height="2" fill="#f0f"/><path d="M325.9 314.9L323.9 316.9L321.1 316.9L319.1 314.9L319.1 312.1L321.1 310.1L323.9 310.1L325.9 312.1z" stroke="#c8c8c8" fill="none"/><path d="M318.0 313.5H327.0M322.5 309.0V318.0" stroke="#f00" fill="none"/><rect x="320.5" y="312.0" width="4" height="2" fill="#f0f"/><path d="M431.9 314.9L429.9 316.9L427.1 316.9L425.1 314.9L425.1 312.1L427.1 310.1L429.9 310.1L431.9 312.1z" stroke="#c8c8c8" fill="none"/><path d="M424.0 313.5H433.0M428.5 309.0V318.0" stroke="#f00" fill="none"/><rect x="426.5" y="312.0" width="4" height="2" fill="#f0f"/><circle cx="375.5" cy="165.5" r="4.400" stroke="#909090" fill="none"/><path d="M378.3 166.6L376.6 168.3L374.4 168.3L372.7 166.6L372.7 164.4L374.4 162.7L376.6 162.7L378.3 164.4z" stroke="#fff" fill="none"/><path d="M370.5 165.5H380.5M375.5 160.5V170.5" stroke="#f00" fill="none"/><rect x="373.0" y="164.0" width="5" height="2" fill="#f0f"/><circle cx="375.5" cy="461.5" r="4.400" stroke="#909090" fill="none"/><path d="M378.3 462.6L376.6 464.3L374.4 464.3L372.7 462.6L372.7 460.4L374.4 458.7L376.6 458.7L378.3 460.4z" stroke="#fff" fill="none"/><path d="M370.5 461.5H380.5M375.5 456.5V466.5" stroke="#f00" fill="none"/><rect x="373.0" y="460.0" width="5" height="2" fill="#f0f"/><circle cx="375.5" cy="239.5" r="4.400" stroke="#909090" fill="none"/><path d="M378.3 240.6L376.6 242.3L374.4 242.3L372.7 240.6L372.7 238.4L374.4 236.7L376.6 236.7L378.3 238.4z" stroke="#fff" fill="none"/><path d="M370.5 239.5H380.5M375.5 234.5V244.5" stroke="#f00" fill="none"/><rect x="373.0" y="238.0" width="5" height="2" fill="#f0f"/><circle cx="375.5" cy="387.5" r="4.400" stroke="#909090" fill="none"/><path d="M378.3 388.6L376.6 390.3L374.4 390.3L372.7 388.6L372.7 386.4L374.4 384.7L376.6 384.7L378.3 386.4z" stroke="#fff" fill="none"/><path d="M370.5 387.5H380.5M375.5 382.5V392.5" stroke="#f00" fill="none"/><rect x="373.0" y="386.0" width="5" height="2" fill="#f0f"/><path d="M345.0 168.2L341.2 172.0L335.8 172.0L332.0 168.2L332.0 162.8L335.8 159.0L341.2 159.0L345.0 162.8z" stroke="#fff" fill="none"/><path d="M331.0 165.5H336.0M337.0 165.5H340.0M341.0 165.5H346.0M338.5 158.0V163.0M338.5 164.0V167.0M338.5 168.0V173.5" stroke="#f00" fill="none"/><path d="M345.0 464.2L341.2 468.0L335.8 468.0L332.0 464.2L332.0 458.8L335.8 455.0L341.2 455.0L345.0 458.8z" stroke="#fff" fill="none"/><path d="M331.0 461.5H336.0M337.0 461.5H340.0M341.0 461.5H346.0M338.5 454.0V459.0M338.5 460.0V463.0M338.5 464.0V469.5" stroke="#f00" fill="none"/><path d="M419.0 168.2L415.2 172.0L409.8 172.0L406.0 168.2L406.0 162.8L409.8 159.0L415.2 159.0L419.0 162.8z" stroke="#fff" fill="none"/><path d="M405.0 165.5H410.0M411.0 165.5H414.0M415.0 165.5H420.0M412.5 158.0V163.0M412.5 164.0V167.0M412.5 168.0V173.5" stroke="#f00" fill="none"/><path d="M419.0 464.2L415.2 468.0L409.8 468.0L406.0 464.2L406.0 458.8L409.8 455.0L415.2 455.0L419.0 458.8z" stroke="#fff" fill="none"/><path d="M405.0 461.5H410.0M411.0 461.5H414.0M415.0 461.5H420.0M412.5 454.0V459.0M412.5 460.0V463.0M412.5 464.0V469.5" stroke="#f00" fill="none"/><path d="M308.5 242.2L304.7 246.0L299.3 246.0L295.5 242.2L295.5 236.8L299.3 233.0L304.7 233.0L308.5 236.8z" stroke="#fff" fill="none"/><path d="M294.5 239.5H299.5M300.5 239.5H303.5M304.5 239.5H309.5M302 232.0V237.0M302 238.0V241.0M302 242.0V247.5" stroke="#f00" fill="none"/><path d="M308.5 390.2L304.7 394.0L299.3 394.0L295.5 390.2L295.5 384.8L299.3 381.0L304.7 381.0L308.5 384.8z" stroke="#fff" fill="none"/><path d="M294.5 387.5H299.5M300.5 387.5H303.5M304.5 387.5H309.5M302 380.0V385.0M302 386.0V389.0M302 390.0V395.5" stroke="#f00" fill="none"/><path d="M455.5 242.2L451.7 246.0L446.3 246.0L442.5 242.2L442.5 236.8L446.3 233.0L451.7 233.0L455.5 236.8z" stroke="#fff" fill="none"/><path d="M441.5 239.5H446.5M447.5 239.5H450.5M451.5 239.5H456.5M449.0 232.0V237.0M449.0 238.0V241.0M449.0 242.0V247.5" stroke="#f00" fill="none"/><path d="M455.5 390.2L451.7 394.0L446.3 394.0L442.5 390.2L442.5 384.8L446.3 381.0L451.7 381.0L455.5 384.8z" stroke="#fff" fill="none"/><path d="M441.5 387.5H446.5M447.5 387.5H450.5M451.5 387.5H456.5M449.0 380.0V385.0M449.0 386.0V389.0M449.0 390.0V395.5" stroke="#f00" fill="none"/><path d="M382.0 205.2L378.2 209.0L372.8 209.0L369.0 205.2L369.0 199.8L372.8 196.0L378.2 196.0L382.0 199.8z" stroke="#fff" fill="none"/><path d="M368.0 202.5H373.0M374.0 202.5H377.0M378.0 202.5H383.0M375.5 195.0V200.0M375.5 201.0V204.0M375.5 205.0V210.5" stroke="#f00" fill="none"/><path d="M382.0 427.2L378.2 431.0L372.8 431.0L369.0 427.2L369.0 421.8L372.8 418.0L378.2 418.0L382.0 421.8z" stroke="#fff" fill="none"/><path d="M368.0 424.5H373.0M374.0 424.5H377.0M378.0 424.5H383.0M375.5 417.0V422.0M375.5 423.0V426.0M375.5 427.0V432.5" stroke="#f00" fill="none"/><path d="M382.0 279.2L378.2 283.0L372.8 283.0L369.0 279.2L369.0 273.8L372.8 270.0L378.2 270.0L382.0 273.8z" stroke="#fff" fill="none"/><path d="M368.0 276.5H373.0M374.0 276.5H377.0M378.0 276.5H383.0M375.5 269.0V274.0M375.5 275.0V278.0M375.5 279.0V284.5" stroke="#f00" fill="none"/><path d="M382.0 353.2L378.2 357.0L372.8 357.0L369.0 353.2L369.0 347.8L372.8 344.0L378.2 344.0L382.0 347.8z" stroke="#fff" fill="none"/><path d="M368.0 350.5H373.0M374.0 350.5H377.0M378.0 350.5H383.0M375.5 343.0V348.0M375.5 349.0V352.0M375.5 353.0V358.5" stroke="#f00" fill="none"/><path d="M345.0 316.2L341.2 320.0L335.8 320.0L332.0 316.2L332.0 310.8L335.8 307.0L341.2 307.0L345.0 310.8z" stroke="#fff" fill="none"/><path d="M331.0 313.5H336.0M337.0 313.5H340.0M341.0 313.5H346.0M338.5 306.0V311.0M338.5 312.0V315.0M338.5 316.0V321.5" stroke="#f00" fill="none"/><path d="M419.0 316.2L415.2 320.0L409.8 320.0L406.0 316.2L406.0 310.8L409.8 307.0L415.2 307.0L419.0 310.8z" stroke="#fff" fill="none"/><path d="M405.0 313.5H410.0M411.0 313.5H414.0M415.0 313.5H420.0M412.5 306.0V311.0M412.5 312.0V315.0M412.5 316.0V321.5" stroke="#f00" fill="none"/><rect x="304.5" y="140.5" width="2" height="2" fill="#f0f"/><rect x="305.5" y="140.0" width="1" height="1" fill="#6f0"/><rect x="304.5" y="484.5" width="2" height="2" fill="#f0f"/><rect x="305.5" y="484.0" width="1" height="1" fill="#6f0"/><rect x="444.5" y="140.5" width="2" height="2" fill="#f0f"/><rect x="445.5" y="140.0" width="1" height="1" fill="#6f0"/><rect x="444.5" y="484.5" width="2" height="2" fill="#f0f"/><rect x="445.5" y="484.0" width="1" height="1" fill="#6f0"/><rect x="308.5" y="192.5" width="2" height="2" fill="#f0f"/><rect x="309.5" y="192.0" width="1" height="1" fill="#6f0"/><rect x="308.5" y="432.5" width="2" height="2" fill="#f0f"/><rect x="309.5" y="432.0" width="1" height="1" fill="#6f0"/><rect x="440.5" y="192.5" width="2" height="2" fill="#f0f"/><rect x="441.5" y="192.0" width="1" height="1" fill="#6f0"/><rect x="440.5" y="432.5" width="2" height="2" fill="#f0f"/><rect x="441.5" y="432.0" width="1" height="1" fill="#6f0"/><rect x="350.5" y="238.5" width="2" height="2" fill="#f0f"/><rect x="351.5" y="238.0" width="1" height="1" fill="#6f0"/><rect x="350.5" y="386.5" width="2" height="2" fill="#f0f"/><rect x="351.5" y="386.0" width="1" height="1" fill="#6f0"/><rect x="398.5" y="238.5" width="2" height="2" fill="#f0f"/><rect x="399.5" y="238.0" width="1" height="1" fill="#6f0"/><rect x="398.5" y="386.5" width="2" height="2" fill="#f0f"/><rect x="399.5" y="386.0" width="1" height="1" fill="#6f0"/><rect x="308.5" y="312.5" width="2" height="2" fill="#f0f"/><rect x="309.5" y="312.0" width="1" height="1" fill="#6f0"/><path d="M374 135h3v7h-3zM375 133h2v1h-2z" fill="#f0f"/><path d="M374 484h4v1h-1v7h1v1h-4v-1h1v-7h-1z" fill="#f0f"/><circle cx="375.500" cy="313.500" r="6.500" stroke="#fff" fill="none"/><path d="M375.500 320.500V271.500M368.500 313.500H419.500" stroke="#fff" fill="none"/><path d="M372.500 271.500L375.500 261.500L378.500 271.500zM419.500 310.500L430 313.500L419.500 316.500z" stroke="#fff" fill="none"/><path d="M376.500 243.500L378.500 248.500V254M381.500 243.500L378.500 248.500" stroke="#fff" fill="none"/><path d="M437.500 309.500L444.500 318.500M444.500 309.500L437.500 318.500" stroke="#fff" fill="none"/></svg>
<svg class="i" style="left:645px;top:86px" width="12" height="21" shape-rendering="crispEdges"><path d="M0 0v16h1v-1h1v-1h1v-1h1v2h1v2h1v2h1v1h2v-1h-1v-2h-1v-2h-1v-2h5v-1h-1v-1h-1v-1h-1v-1h-1v-1h-1v-1h-1v-1h-1v-1h-1v-1h-1v-1h-1v-1h-1v-1z" fill="#000"/><path d="M1 2v12h1v-1h1v-1h1v-1h1v2h1v2h1v2h1v1h1v-2h-1v-2h-1v-2h-1v-1h4v-1h-1v-1h-1v-1h-1v-1h-1v-1h-1v-1h-1v-1h-1v-1h-1v-1h-1v-1z" fill="#fff"/></svg>
<div class="hl" style="left:6px;top:551px;width:738px;height:1px;"></div>
<div class="" style="left:6px;top:556px;width:738px;height:1px;background:#202020"></div>
<div class="grip" style="left:12px;top:565px;width:3px;height:50px;"></div>
<div class="grip" style="left:16px;top:565px;width:3px;height:50px;"></div>
<div class="sunk" style="left:22px;top:561px;width:716px;height:59px;"></div>
<div class="hl" style="left:24px;top:563px;width:696px;height:39px;"></div>
<div class="" style="left:24px;top:602px;width:696px;height:1px;background:#606060"></div>
<div class="hl" style="left:24px;top:603px;width:631px;height:15px;"></div>
<div class="" style="left:655px;top:603px;width:81px;height:15px;background:#d4d0c8"></div>
<div class="dith" style="left:720px;top:563px;width:16px;height:39px;"></div>
<div class="sb" style="left:720px;top:563px;width:16px;height:16px;"><svg class="i" style="left:0;top:0" width="16" height="16" shape-rendering="crispEdges"><path d="M4 10h7v-1h-1v-1h-1v-1h-1v-1h-1v1h-1v1h-1v1h-1z"/></svg></div>
<div class="sb" style="left:720px;top:586px;width:16px;height:16px;"><svg class="i" style="left:0;top:0" width="16" height="16" shape-rendering="crispEdges"><path d="M4 6h7v1h-1v1h-1v1h-1v1h-1v-1h-1v-1h-1v-1h-1z"/></svg></div>
<div class="dith" style="left:658px;top:603px;width:60px;height:15px;"></div>
<div class="sb" style="left:658px;top:603px;width:15px;height:15px;"><svg class="i" style="left:0;top:0" width="16" height="16" shape-rendering="crispEdges"><path d="M7 5h1v5h-1v-1h-1v-1h-1v-1h1v-1h1z"/></svg></div>
<div class="sb" style="left:673px;top:603px;width:15px;height:15px;"></div>
<div class="sb" style="left:703px;top:603px;width:15px;height:15px;"><svg class="i" style="left:0;top:0" width="16" height="16" shape-rendering="crispEdges"><path d="M7 5h1v1h1v1h1v1h-1v1h-1v1h-1z"/></svg></div>
<svg class="t" role="img" aria-label="命令" style="left:26px;top:563px;color:#000" width="34" height="12"><use href="#g547ds13" x="0"/><use href="#g4ee4s13" x="16"/></svg>
<svg class="t" style="left:60px;top:567px;color:#000" width="2" height="7"><path d="M0 0h1v1h-1zM1 0h1v1h-1zM0 1h1v1h-1zM1 1h1v1h-1zM0 5h1v1h-1zM1 5h1v1h-1zM0 6h1v1h-1zM1 6h1v1h-1z"/></svg>
<svg class="t" style="left:73px;top:567px;color:#000" width="7" height="5"><path d="M1 0h1v1h-1zM5 0h1v1h-1zM2 1h1v1h-1zM4 1h1v1h-1zM0 2h1v1h-1zM1 2h1v1h-1zM2 2h1v1h-1zM3 2h1v1h-1zM4 2h1v1h-1zM5 2h1v1h-1zM6 2h1v1h-1zM2 3h1v1h-1zM4 3h1v1h-1zM1 4h1v1h-1zM5 4h1v1h-1z"/></svg>
<svg class="t" role="img" aria-label="取消" style="left:81px;top:563px;color:#000" width="34" height="12"><use href="#g53d6s13" x="0"/><use href="#g6d88s13" x="16"/></svg>
<svg class="t" style="left:113px;top:567px;color:#000" width="7" height="5"><path d="M1 0h1v1h-1zM5 0h1v1h-1zM2 1h1v1h-1zM4 1h1v1h-1zM0 2h1v1h-1zM1 2h1v1h-1zM2 2h1v1h-1zM3 2h1v1h-1zM4 2h1v1h-1zM5 2h1v1h-1zM6 2h1v1h-1zM2 3h1v1h-1zM4 3h1v1h-1zM1 4h1v1h-1zM5 4h1v1h-1z"/></svg>
<svg class="t" role="img" aria-label="命令" style="left:26px;top:576px;color:#000" width="34" height="12"><use href="#g547ds13" x="0"/><use href="#g4ee4s13" x="16"/></svg>
<svg class="t" style="left:60px;top:580px;color:#000" width="2" height="7"><path d="M0 0h1v1h-1zM1 0h1v1h-1zM0 1h1v1h-1zM1 1h1v1h-1zM0 5h1v1h-1zM1 5h1v1h-1zM0 6h1v1h-1zM1 6h1v1h-1z"/></svg>
<svg class="t" style="left:73px;top:580px;color:#000" width="7" height="5"><path d="M1 0h1v1h-1zM5 0h1v1h-1zM2 1h1v1h-1zM4 1h1v1h-1zM0 2h1v1h-1zM1 2h1v1h-1zM2 2h1v1h-1zM3 2h1v1h-1zM4 2h1v1h-1zM5 2h1v1h-1zM6 2h1v1h-1zM2 3h1v1h-1zM4 3h1v1h-1zM1 4h1v1h-1zM5 4h1v1h-1z"/></svg>
<svg class="t" role="img" aria-label="取消" style="left:81px;top:576px;color:#000" width="34" height="12"><use href="#g53d6s13" x="0"/><use href="#g6d88s13" x="16"/></svg>
<svg class="t" style="left:113px;top:580px;color:#000" width="7" height="5"><path d="M1 0h1v1h-1zM5 0h1v1h-1zM2 1h1v1h-1zM4 1h1v1h-1zM0 2h1v1h-1zM1 2h1v1h-1zM2 2h1v1h-1zM3 2h1v1h-1zM4 2h1v1h-1zM5 2h1v1h-1zM6 2h1v1h-1zM2 3h1v1h-1zM4 3h1v1h-1zM1 4h1v1h-1zM5 4h1v1h-1z"/></svg>
<svg class="t" role="img" aria-label="命令" style="left:26px;top:589px;color:#000" width="34" height="12"><use href="#g547ds13" x="0"/><use href="#g4ee4s13" x="16"/></svg>
<svg class="t" style="left:60px;top:593px;color:#000" width="2" height="7"><path d="M0 0h1v1h-1zM1 0h1v1h-1zM0 1h1v1h-1zM1 1h1v1h-1zM0 5h1v1h-1zM1 5h1v1h-1zM0 6h1v1h-1zM1 6h1v1h-1z"/></svg>
<svg class="t" style="left:73px;top:593px;color:#000" width="7" height="5"><path d="M1 0h1v1h-1zM5 0h1v1h-1zM2 1h1v1h-1zM4 1h1v1h-1zM0 2h1v1h-1zM1 2h1v1h-1zM2 2h1v1h-1zM3 2h1v1h-1zM4 2h1v1h-1zM5 2h1v1h-1zM6 2h1v1h-1zM2 3h1v1h-1zM4 3h1v1h-1zM1 4h1v1h-1zM5 4h1v1h-1z"/></svg>
<svg class="t" role="img" aria-label="取消" style="left:81px;top:589px;color:#000" width="34" height="12"><use href="#g53d6s13" x="0"/><use href="#g6d88s13" x="16"/></svg>
<svg class="t" style="left:113px;top:593px;color:#000" width="7" height="5"><path d="M1 0h1v1h-1zM5 0h1v1h-1zM2 1h1v1h-1zM4 1h1v1h-1zM0 2h1v1h-1zM1 2h1v1h-1zM2 2h1v1h-1zM3 2h1v1h-1zM4 2h1v1h-1zM5 2h1v1h-1zM6 2h1v1h-1zM2 3h1v1h-1zM4 3h1v1h-1zM1 4h1v1h-1zM5 4h1v1h-1z"/></svg>
<svg class="t" role="img" aria-label="命令" style="left:26px;top:605px;color:#000" width="34" height="12"><use href="#g547ds13" x="0"/><use href="#g4ee4s13" x="16"/></svg>
<svg class="t" style="left:60px;top:609px;color:#000" width="2" height="7"><path d="M0 0h1v1h-1zM1 0h1v1h-1zM0 1h1v1h-1zM1 1h1v1h-1zM0 5h1v1h-1zM1 5h1v1h-1zM0 6h1v1h-1zM1 6h1v1h-1z"/></svg>
<div class="dk" style="left:6px;top:620px;width:738px;height:1px;"></div>
<div class="hl" style="left:6px;top:621px;width:738px;height:1px;"></div>
<svg class="t" role="img" aria-label="燕秀字高" style="left:13px;top:630px;color:#000" width="50" height="12"><use href="#g71d5" x="0"/><use href="#g79c0" x="12"/><use href="#g5b57" x="24"/><use href="#g9ad8" x="36"/></svg>
<span class="mono" style="left:60px;top:629px;font-size:12px;line-height:13px;letter-spacing:-1.2px">=7</span>
<div class="s1" style="left:79px;top:625px;width:250px;height:18px;"></div>
<span class="mono" style="left:80px;top:629px;font-size:12px;line-height:13px;letter-spacing:-1.2px">721.4460,  597.4731 , 0.0000</span>
<div class="r1" style="left:333px;top:625px;width:28px;height:18px;"></div>
<svg class="t" role="img" aria-label="捕捉" style="left:335px;top:629px;color:#000" width="26" height="12"><use href="#g6355" x="0"/><use href="#g6349" x="12"/></svg>
<div class="r1" style="left:365px;top:625px;width:28px;height:18px;"></div>
<svg class="t" role="img" aria-label="栅格" style="left:367px;top:629px;color:#000" width="26" height="12"><use href="#g6805" x="0"/><use href="#g683c" x="12"/></svg>
<div class="r1" style="left:397px;top:625px;width:28px;height:18px;"></div>
<svg class="t" role="img" aria-label="正交" style="left:399px;top:629px;color:#000" width="26" height="12"><use href="#g6b63" x="0"/><use href="#g4ea4" x="12"/></svg>
<div class="r1" style="left:429px;top:625px;width:28px;height:18px;"></div>
<svg class="t" role="img" aria-label="极轴" style="left:431px;top:629px;color:#000" width="26" height="12"><use href="#g6781" x="0"/><use href="#g8f74" x="12"/></svg>
<div class="r1" style="left:461px;top:625px;width:52px;height:18px;"></div>
<svg class="t" role="img" aria-label="对象捕捉" style="left:463px;top:629px;color:#000" width="50" height="12"><use href="#g5bf9" x="0"/><use href="#g8c61" x="12"/><use href="#g6355" x="24"/><use href="#g6349" x="36"/></svg>
<div class="r1" style="left:517px;top:625px;width:52px;height:18px;"></div>
<svg class="t" role="img" aria-label="对象追踪" style="left:519px;top:629px;color:#000" width="50" height="12"><use href="#g5bf9" x="0"/><use href="#g8c61" x="12"/><use href="#g8ffd" x="24"/><use href="#g8e2a" x="36"/></svg>
<div class="r1" style="left:573px;top:625px;width:28px;height:18px;"></div>
<svg class="t" role="img" aria-label="线宽" style="left:575px;top:629px;color:#000" width="26" height="12"><use href="#g7ebf" x="0"/><use href="#g5bbd" x="12"/></svg>
<div class="" style="left:605px;top:625px;width:28px;height:18px;box-shadow:inset 1px 1px 0 #000,inset -1px -1px 0 #fff"></div>
<svg class="t" role="img" aria-label="模型" style="left:608px;top:630px;color:#000" width="26" height="12"><use href="#g6a21" x="0"/><use href="#g578b" x="12"/></svg>
<div class="s1" style="left:688px;top:625px;width:24px;height:18px;"></div>
<svg class="i" style="left:690px;top:626px" width="20" height="16" viewBox="0 0 20 16"><path d="M3.500 1.500C5.500 .5 9.500 3 10.500 7.500 9 9.500 5 9 3.500 6 3 4 3 2.500 3.500 1.500z" fill="#dfe9fb" stroke="#2f63bd" stroke-width="1.100"/><path d="M7 4.500L12 .8" stroke="#2f63bd" stroke-width="1.200"/><path d="M5.500 8.500L4.500 12.200H2.500V13.200H9" fill="none" stroke="#2f63bd" stroke-width="1.200"/><path d="M12 4.500L17.800 15.200H6.200z" fill="#f8dc18" stroke="#c09400" stroke-width=".9" stroke-linejoin="round"/><path d="M11.300 8h1.500v3.800h-1.500zM11.300 12.600h1.500v1.500h-1.500z" fill="#000"/></svg>
<svg class="i" style="left:718px;top:636px" width="7" height="4" shape-rendering="crispEdges"><path d="M0 0h7v1h-1v1h-1v1h-1v1h-1v-1h-1v-1h-1v-1h-1z"/></svg>
<svg class="i" style="left:731px;top:631px" width="13" height="13" viewBox="0 0 13 13" shape-rendering="crispEdges"><path d="M12 0L0 12M12 4L4 12M12 8L8 12" stroke="#fff" stroke-width="1" transform="translate(-1 0)"/><path d="M12 1L1 12M12 2L2 12M12 5L5 12M12 6L6 12M12 9L9 12M12 10L10 12" stroke="#808080" stroke-width="1"/></svg>
</body></html>
